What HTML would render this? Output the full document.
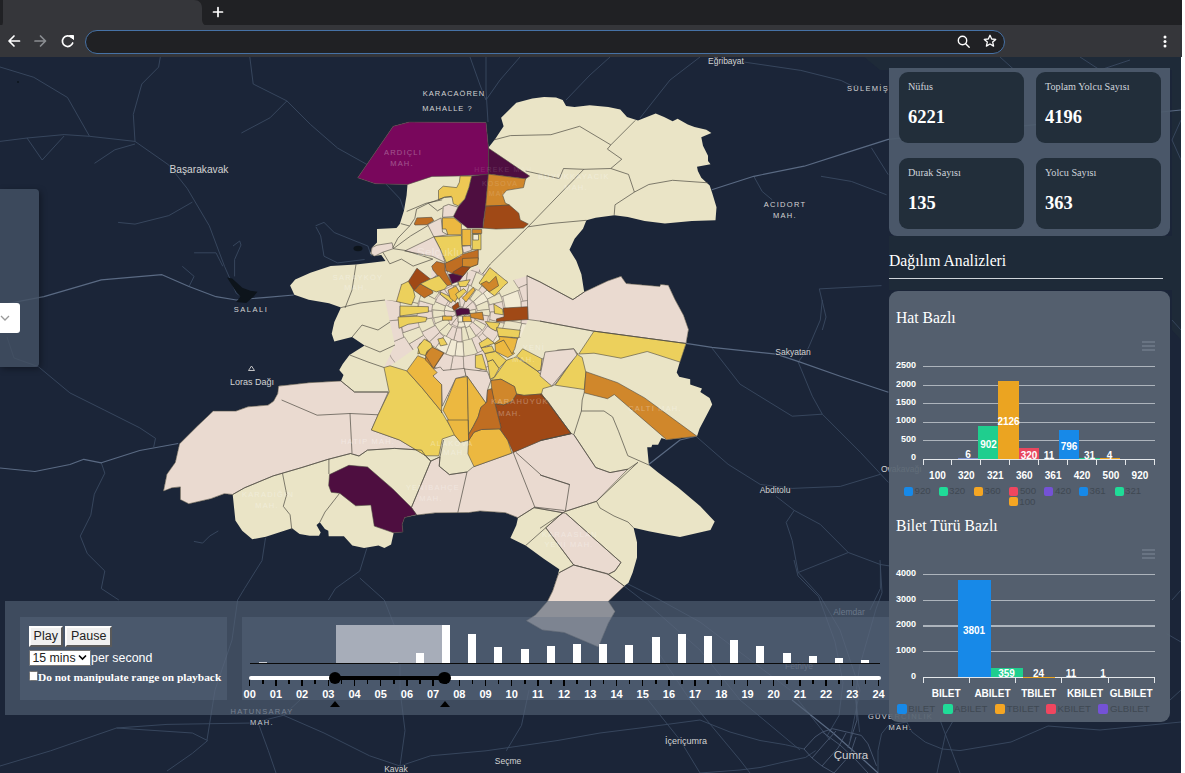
<!DOCTYPE html>
<html><head><meta charset="utf-8">
<style>
*{box-sizing:border-box;margin:0;padding:0}
html,body{width:1185px;height:773px;overflow:hidden;background:#fff;font-family:"Liberation Sans",sans-serif}
#root{position:absolute;left:0;top:0;width:1185px;height:773px;overflow:hidden;background:#fff}
.abs{position:absolute}
#tabbar{left:0;top:0;width:1182px;height:26px;background:#202124}
#tab{left:3px;top:0;width:200px;height:26px;background:#35363a;border-radius:0 8px 0 0}
#toolbar{left:0;top:25px;width:1182px;height:32px;background:#35363a}
#url{left:85px;top:30px;width:920px;height:24px;border-radius:12px;background:#202124;border:1.5px solid #4672a6}
#map{left:0;top:57px;width:1181px;height:716px;background:#1b2538;overflow:hidden}
.serif{font-family:"Liberation Serif",serif}
.card{position:absolute;background:#222e3a;border-radius:9px;width:125px;height:71px}
.card .t{position:absolute;left:9px;top:8.5px;font:10.2px "Liberation Serif",serif;color:#cfd4da;white-space:nowrap}
.card .v{position:absolute;left:9px;top:35px;font:bold 18.5px "Liberation Serif",serif;color:#fff}
.yl{position:absolute;font:bold 9px "Liberation Sans",sans-serif;color:#fff;left:896px;width:20px;text-align:right;line-height:10px}
.xl{position:absolute;font:bold 10px "Liberation Sans",sans-serif;color:#fff;text-align:center;line-height:10px;white-space:nowrap}
.gl{position:absolute;left:923px;width:232px;height:1.2px;background:#adb4bc}
.dl{position:absolute;font:bold 10px "Liberation Sans",sans-serif;color:#fff;text-align:center;line-height:10px;width:30px}
.lg{position:absolute;font:9.7px "Liberation Sans",sans-serif;color:#3f4852;line-height:10px;white-space:nowrap}
.lm{position:absolute;width:9px;height:9px;border-radius:2px}
.hb{position:absolute;width:8px;background:#fff}
.tl{position:absolute;font:bold 11px "Liberation Sans",sans-serif;color:#fff;width:20px;text-align:center;top:688px;line-height:12px}
</style></head><body><div id="root">
<!-- MAP -->
<div id="map" class="abs">
<svg id="mapsvg" width="1181" height="716" viewBox="0 57 1181 716" style="position:absolute;left:0;top:0">
<polygon points="864,57 1181,57 1181,340 1172,330 1172,290 889,290 889,236 1172,236 1172,70 880,70" fill="#1e2a38"/>
<polyline points="0.0,67.0 33.8,77.3 67.5,97.5 89.5,136.3 135.0,141.4 168.8,165.0 187.3,188.6 209.3,225.8 224.5,266.3 236.3,293.3 246.4,300.0" fill="none" stroke="#3a4961" stroke-width="0.9" stroke-linejoin="round"/>
<polyline points="135.0,141.4 133.3,114.4 141.8,84.0 158.6,67.1 160.3,57.0" fill="none" stroke="#3a4961" stroke-width="0.9" stroke-linejoin="round"/>
<polyline points="0.0,141.4 27.0,138.0 64.1,134.6 89.5,136.3" fill="none" stroke="#3a4961" stroke-width="0.9" stroke-linejoin="round"/>
<polyline points="27.0,138.0 42.2,160.0 64.1,136.0" fill="none" stroke="#3a4961" stroke-width="0.9" stroke-linejoin="round"/>
<polyline points="94.5,163.3 114.8,149.8 135.0,144.0" fill="none" stroke="#3a4961" stroke-width="0.9" stroke-linejoin="round"/>
<polyline points="118.1,222.4 135.0,224.1 168.8,215.6 192.4,202.1" fill="none" stroke="#3a4961" stroke-width="0.9" stroke-linejoin="round"/>
<polyline points="249.8,57.0 253.2,84.0 286.9,100.9 310.5,124.5 337.6,148.1 367.9,165.0 400.0,198.8 404.0,210.0" fill="none" stroke="#3a4961" stroke-width="0.9" stroke-linejoin="round"/>
<polyline points="241.4,133.0 270.0,117.8 286.9,100.9" fill="none" stroke="#3a4961" stroke-width="0.9" stroke-linejoin="round"/>
<polyline points="315.6,225.8 324.0,222.4 334.2,232.5 351.0,239.3 367.9,246.0 371.3,256.2" fill="none" stroke="#3a4961" stroke-width="0.9" stroke-linejoin="round"/>
<polyline points="316.0,227.0 320.7,235.9 324.0,256.2 337.6,262.9 364.6,259.5" fill="none" stroke="#3a4961" stroke-width="0.9" stroke-linejoin="round"/>
<polyline points="194.1,252.8 216.0,252.8 222.8,266.3" fill="none" stroke="#3a4961" stroke-width="0.9" stroke-linejoin="round"/>
<polyline points="182.3,266.3 194.1,276.4 189.0,286.5" fill="none" stroke="#3a4961" stroke-width="0.9" stroke-linejoin="round"/>
<polyline points="233.0,246.0 239.7,241.0 241.0,245.0 234.6,259.5 234.6,276.4" fill="none" stroke="#3a4961" stroke-width="0.9" stroke-linejoin="round"/>
<polyline points="7.0,337.0 14.0,358.0 38.4,366.7 69.9,392.9 104.8,410.3 139.7,427.8 155.5,438.3 153.7,447.0" fill="none" stroke="#3a4961" stroke-width="0.9" stroke-linejoin="round"/>
<polyline points="101.3,462.8 104.8,473.2 94.3,494.2 90.8,515.2 80.3,536.1 87.3,553.6 104.8,571.0 101.3,588.5 118.8,600.0" fill="none" stroke="#3a4961" stroke-width="0.9" stroke-linejoin="round"/>
<polyline points="193.9,541.4 202.6,543.1 209.6,536.1 218.3,530.9" fill="none" stroke="#3a4961" stroke-width="0.9" stroke-linejoin="round"/>
<polyline points="265.5,537.9 262.0,560.6 244.5,588.5 237.6,600.0 232.0,640.0 215.0,690.0 207.0,740.0" fill="none" stroke="#3a4961" stroke-width="0.9" stroke-linejoin="round"/>
<polyline points="366.8,548.3 359.8,571.0 335.4,588.5 328.4,600.0" fill="none" stroke="#3a4961" stroke-width="0.9" stroke-linejoin="round"/>
<polyline points="359.8,578.0 384.3,600.0 400.0,640.0 400.0,690.0 405.0,730.5 400.0,766.0" fill="none" stroke="#3a4961" stroke-width="0.9" stroke-linejoin="round"/>
<polyline points="743.7,62.0 800.8,70.4 841.2,80.5 858.0,88.9" fill="none" stroke="#3a4961" stroke-width="0.9" stroke-linejoin="round"/>
<polyline points="753.8,176.3 762.2,191.5 772.3,199.9" fill="none" stroke="#3a4961" stroke-width="0.9" stroke-linejoin="round"/>
<polyline points="821.0,176.3 851.3,181.4 886.6,194.8" fill="none" stroke="#3a4961" stroke-width="0.9" stroke-linejoin="round"/>
<polyline points="871.4,147.8 888.2,174.6" fill="none" stroke="#3a4961" stroke-width="0.9" stroke-linejoin="round"/>
<polyline points="819.3,288.9 881.5,285.6" fill="none" stroke="#3a4961" stroke-width="0.9" stroke-linejoin="round"/>
<polyline points="819.3,288.9 826.0,317.0 822.3,330.0" fill="none" stroke="#3a4961" stroke-width="0.9" stroke-linejoin="round"/>
<polyline points="822.3,300.0 820.3,320.0 808.3,348.1 798.2,362.1 812.3,396.2 822.3,414.2 860.4,452.3 888.4,482.4" fill="none" stroke="#3a4961" stroke-width="0.9" stroke-linejoin="round"/>
<polyline points="712.0,348.1 740.1,384.2 792.2,416.2 822.3,414.2" fill="none" stroke="#3a4961" stroke-width="0.9" stroke-linejoin="round"/>
<polyline points="696.0,436.3 728.1,464.3 760.2,484.4 792.2,488.4 840.3,486.4 880.4,474.3" fill="none" stroke="#3a4961" stroke-width="0.9" stroke-linejoin="round"/>
<polyline points="776.2,496.4 794.2,510.4 820.3,524.4 848.3,552.5 880.4,564.5 890.0,566.0" fill="none" stroke="#3a4961" stroke-width="0.9" stroke-linejoin="round"/>
<polyline points="794.2,510.4 786.2,522.4 792.2,540.5 798.2,572.5 820.3,596.6 840.0,630.0 860.0,690.0 850.0,740.0" fill="none" stroke="#3a4961" stroke-width="0.9" stroke-linejoin="round"/>
<polyline points="798.2,572.5 848.3,552.5" fill="none" stroke="#3a4961" stroke-width="0.9" stroke-linejoin="round"/>
<polyline points="880.4,564.5 880.4,588.6 870.0,610.0" fill="none" stroke="#3a4961" stroke-width="0.9" stroke-linejoin="round"/>
<polyline points="0.0,766.0 50.6,750.8 116.5,728.0 192.4,733.0 207.6,740.6 192.4,753.3 167.0,771.0" fill="none" stroke="#3a4961" stroke-width="0.9" stroke-linejoin="round"/>
<polyline points="116.5,728.0 167.0,724.4 253.0,723.0 283.5,715.3 300.0,700.0" fill="none" stroke="#3a4961" stroke-width="0.9" stroke-linejoin="round"/>
<polyline points="258.2,723.0 268.4,750.8 276.0,773.0" fill="none" stroke="#3a4961" stroke-width="0.9" stroke-linejoin="round"/>
<polyline points="283.5,715.3 324.0,733.0 369.6,755.8 400.0,766.0 430.4,755.8 486.0,750.8 557.0,740.6 600.0,733.0 640.0,728.0 700.0,720.0" fill="none" stroke="#3a4961" stroke-width="0.9" stroke-linejoin="round"/>
<polyline points="529.0,690.0 521.5,725.4 506.3,750.8" fill="none" stroke="#3a4961" stroke-width="0.9" stroke-linejoin="round"/>
<polyline points="640.0,690.0 680.0,740.0 700.0,773.0" fill="none" stroke="#3a4961" stroke-width="0.9" stroke-linejoin="round"/>
<polyline points="650.0,640.0 690.0,700.0 740.0,760.0 750.0,773.0" fill="none" stroke="#3a4961" stroke-width="0.9" stroke-linejoin="round"/>
<polyline points="794.0,560.0 798.0,576.0 818.7,596.8 835.0,641.9 843.0,682.8 839.0,715.5 827.0,736.0" fill="none" stroke="#3a4961" stroke-width="0.9" stroke-linejoin="round"/>
<polyline points="880.0,560.0 882.0,592.7 876.0,609.0 859.6,666.4 855.5,695.0 859.6,732.0" fill="none" stroke="#3a4961" stroke-width="0.9" stroke-linejoin="round"/>
<polyline points="700.0,720.0 730.0,732.0 760.0,740.5 785.3,744.7 804.0,749.0" fill="none" stroke="#3a4961" stroke-width="0.9" stroke-linejoin="round"/>
<polyline points="700.0,773.0 740.0,770.0 760.0,767.5 782.0,762.4 805.6,757.4 815.7,750.6" fill="none" stroke="#3a4961" stroke-width="0.9" stroke-linejoin="round"/>
<polyline points="878.0,773.0 878.0,750.6 881.5,733.8 888.3,725.3 906.8,722.0 912.0,732.0 925.4,742.2 942.3,749.0 960.0,750.6 1011.0,742.0 1048.0,726.0 1100.0,730.0 1181.0,722.0" fill="none" stroke="#3a4961" stroke-width="0.9" stroke-linejoin="round"/>
<polyline points="942.3,749.0 938.9,764.0 937.0,773.0" fill="none" stroke="#3a4961" stroke-width="0.9" stroke-linejoin="round"/>
<polyline points="952.4,722.0 945.6,733.8 942.3,749.0" fill="none" stroke="#3a4961" stroke-width="0.9" stroke-linejoin="round"/>
<polyline points="1166.6,633.7 1181.0,642.0" fill="none" stroke="#3a4961" stroke-width="0.9" stroke-linejoin="round"/>
<polyline points="626.0,583.0 660.0,600.0 700.0,622.0 790.0,690.0 830.0,740.0" fill="none" stroke="#3a4961" stroke-width="0.9" stroke-linejoin="round"/>
<polyline points="624.0,586.0 650.0,606.0 700.0,650.0 740.0,700.0 800.0,750.0" fill="none" stroke="#3a4961" stroke-width="0.9" stroke-linejoin="round"/>
<polyline points="950.0,690.0 940.0,720.0 960.0,773.0" fill="none" stroke="#3a4961" stroke-width="0.9" stroke-linejoin="round"/>
<polyline points="1170.0,700.0 1181.0,690.0" fill="none" stroke="#3a4961" stroke-width="0.9" stroke-linejoin="round"/>
<polyline points="486.0,57.0 486.0,90.0 488.0,122.0" fill="none" stroke="#3a4961" stroke-width="0.9" stroke-linejoin="round"/>
<polyline points="486.0,100.0 500.0,80.0 520.0,57.0" fill="none" stroke="#3a4961" stroke-width="0.9" stroke-linejoin="round"/>
<polyline points="470.0,57.0 480.0,85.0 486.0,100.0" fill="none" stroke="#3a4961" stroke-width="0.9" stroke-linejoin="round"/>
<polyline points="610.0,57.0 590.0,75.0 566.0,100.0" fill="none" stroke="#3a4961" stroke-width="0.9" stroke-linejoin="round"/>
<polyline points="700.0,57.0 670.0,80.0 640.0,118.0" fill="none" stroke="#3a4961" stroke-width="0.9" stroke-linejoin="round"/>
<polyline points="1000.0,57.0 1020.0,75.0 1000.0,100.0" fill="none" stroke="#3a4961" stroke-width="0.9" stroke-linejoin="round"/>
<polyline points="1080.0,57.0 1100.0,70.0 1130.0,60.0" fill="none" stroke="#3a4961" stroke-width="0.9" stroke-linejoin="round"/>
<polyline points="1181.0,120.0 1172.0,140.0 1181.0,160.0" fill="none" stroke="#3a4961" stroke-width="0.9" stroke-linejoin="round"/>
<polyline points="1172.0,320.0 1181.0,330.0" fill="none" stroke="#3a4961" stroke-width="0.9" stroke-linejoin="round"/>
<polyline points="1172.0,600.0 1181.0,590.0" fill="none" stroke="#3a4961" stroke-width="0.9" stroke-linejoin="round"/>
<polyline points="0.0,305.0 43.9,296.7 101.3,279.8 162.0,274.7 189.0,286.5 216.0,296.7 236.3,300.0 266.7,297.3 293.7,295.0" fill="none" stroke="#5a6a83" stroke-width="1.2" stroke-linejoin="round"/>
<polyline points="0.0,468.0 34.9,471.5 69.9,464.5 83.8,459.3 101.3,462.8 139.7,450.5 178.2,443.5" fill="none" stroke="#5a6a83" stroke-width="1.2" stroke-linejoin="round"/>
<polyline points="711.8,189.8 753.8,176.3 804.2,166.2 851.3,151.1 888.2,139.4 1181.0,110.0" fill="none" stroke="#5a6a83" stroke-width="1.2" stroke-linejoin="round"/>
<polyline points="686.0,343.3 712.0,347.3 776.2,354.1 800.2,362.1 840.3,376.2 888.4,392.2" fill="none" stroke="#5a6a83" stroke-width="1.2" stroke-linejoin="round"/>
<polyline points="648.0,465.0 680.0,440.0 697.0,436.0" fill="none" stroke="#5a6a83" stroke-width="1.2" stroke-linejoin="round"/>
<polyline points="792.0,700.0 812.0,716.0 832.0,732.0 850.0,748.0 866.0,762.0 878.0,773.0" fill="none" stroke="#5a6a83" stroke-width="1.2" stroke-linejoin="round"/>
<polyline points="822.4,732.0 840.0,745.0 856.0,760.0 868.0,773.0" fill="none" stroke="#4a5870" stroke-width="0.9" stroke-linejoin="round"/>
<polyline points="832.6,728.7 861.3,735.4 868.0,743.9 876.5,765.8" fill="none" stroke="#4a5870" stroke-width="0.9" stroke-linejoin="round"/>
<polyline points="804.0,749.0 815.0,737.0 822.4,732.0 832.6,728.7" fill="none" stroke="#4a5870" stroke-width="0.9" stroke-linejoin="round"/>
<polyline points="812.0,758.0 826.0,742.0 836.0,731.0" fill="none" stroke="#4a5870" stroke-width="0.9" stroke-linejoin="round"/>
<polyline points="822.0,766.0 838.0,748.0 846.0,733.0" fill="none" stroke="#4a5870" stroke-width="0.9" stroke-linejoin="round"/>
<polyline points="834.0,773.0 850.0,755.0 856.0,737.0" fill="none" stroke="#4a5870" stroke-width="0.9" stroke-linejoin="round"/>
<polyline points="856.0,700.0 857.0,720.0 852.0,735.0 848.0,748.0" fill="none" stroke="#4a5870" stroke-width="0.9" stroke-linejoin="round"/>
<polyline points="804.0,749.0 812.0,758.0 822.0,766.0 834.0,773.0" fill="none" stroke="#4a5870" stroke-width="0.9" stroke-linejoin="round"/>
<polygon points="227.1,277.6 232.2,278.6 242.3,287.7 250.4,290.8 257.5,291.8 253.4,296.8 246.3,302.9 236.200,301.9 240.300,296.8 234.200,288.7" fill="#0d141b"/>
<ellipse cx="358" cy="248.500" rx="4.500" ry="2.800" fill="#0d141b"/>
<circle cx="18" cy="82" r="1" fill="#0d141b"/>
<polygon points="357.7,177.8 393.2,126.3 409.2,122.1 486.0,122.4 488.5,148.2 489.3,146.5 495.2,139.0 503.6,126.3 501.1,117.8 508.7,110.3 516.3,102.7 532.3,98.4 544.1,97.1 556.0,97.6 562.7,100.1 566.1,106.0 574.5,106.9 589.7,105.2 608.3,106.9 620.3,109.4 627.0,117.0 638.0,120.4 655.7,113.6 664.1,117.0 672.6,121.2 677.6,118.7 687.8,124.6 694.5,127.1 706.3,129.7 711.4,133.0 701.3,137.3 703.0,145.7 708.0,155.8 708.0,160.9 710.5,164.3 697.0,166.8 697.9,171.0 701.3,177.8 709.7,185.4 712.2,193.0 716.5,207.3 715.5,220.3 691.9,221.1 664.9,223.6 644.6,221.1 627.8,216.9 614.3,215.2 595.7,217.7 586.4,220.3 583.0,228.7 574.6,238.8 569.5,249.8 576.3,260.8 581.4,274.3 584.2,292.0 607.5,281.0 621.0,276.3 626.1,283.5 659.8,286.4 660.7,284.4 668.3,285.2 675.0,299.6 683.5,315.2 688.5,329.5 686.0,343.9 680.0,361.6 676.7,372.6 679.2,376.8 690.2,379.3 690.2,384.4 702.0,388.6 700.3,392.0 709.6,397.9 712.2,404.6 706.2,416.0 699.5,428.7 697.0,436.3 666.6,439.7 661.5,438.0 658.1,444.7 652.2,444.7 651.4,447.3 647.2,447.3 648.9,465.0 658.1,472.6 678.4,487.8 700.3,506.3 714.7,521.5 710.5,530.0 680.0,537.1 665.7,534.6 648.8,531.2 633.6,527.8 637.0,542.2 637.0,557.4 632.7,572.6 628.5,582.7 624.3,586.1 608.3,601.3 615.0,611.4 608.3,623.2 598.4,647.0 564.2,632.5 542.4,630.0 526.4,620.7 535.7,614.8 547.5,601.3 552.6,591.1 557.6,576.0 559.3,569.2 544.1,559.1 525.6,545.6 510.4,538.0 516.3,525.3 518.0,517.7 505.3,512.7 480.0,511.0 468.8,512.6 435.0,512.9 416.5,515.1 404.6,517.6 402.1,524.4 403.0,532.0 393.7,532.8 391.1,544.6 384.4,548.0 378.5,545.5 364.1,548.0 352.3,545.5 343.9,536.2 328.7,536.2 328.3,530.8 324.9,529.1 319.8,522.3 316.5,524.9 320.7,532.4 319.0,535.8 309.7,535.8 299.6,534.1 292.0,528.2 265.8,536.7 252.3,539.2 242.2,530.8 235.4,520.6 232.7,494.5 224.3,493.7 210.8,498.7 188.8,503.8 180.4,499.6 180.4,486.9 171.9,487.8 163.5,491.1 166.9,474.3 175.3,462.4 179.5,443.9 197.3,426.2 213.3,411.0 236.1,411.0 247.9,406.8 268.1,405.1 273.5,401.3 277.7,393.7 278.6,386.1 308.9,382.7 341.0,381.0 343.5,375.1 339.3,370.0 342.7,364.1 349.5,354.9 364.6,345.6 352.0,337.1 334.3,341.4 331.7,333.8 334.3,321.9 341.0,307.6 329.0,303.2 308.7,299.8 294.3,294.8 290.1,285.5 295.2,279.6 310.4,272.8 330.6,266.1 356.0,264.4 371.1,262.7 385.5,261.0 381.3,255.1 373.7,255.9 370.3,253.4 372.0,247.5 377.0,242.4 377.0,228.9 396.5,228.1 399.8,223.9 404.0,210.4 406.6,195.2 407.5,184.5 375.4,183.7" fill="#eae4c6"/>
<clipPath id="rc"><polygon points="446.0,263.0 462.0,276.0 478.0,266.0 482.0,274.0 490.0,267.0 508.0,282.0 527.0,276.0 528.0,320.0 520.0,338.0 512.0,354.0 495.0,344.0 487.0,372.0 487.0,403.0 465.0,370.0 442.0,406.0 441.6,384.6 432.8,377.1 425.0,356.0 417.0,347.0 390.0,366.0 384.0,367.0 395.0,345.0 390.0,322.0 385.0,300.0 396.0,301.0 401.0,284.0 408.0,281.0 417.0,268.0 431.0,279.0 432.0,266.0 436.0,261.0"/></clipPath><g clip-path="url(#rc)">
<polygon points="446.0,263.0 462.0,276.0 478.0,266.0 482.0,274.0 490.0,267.0 508.0,282.0 527.0,276.0 528.0,320.0 520.0,338.0 512.0,354.0 495.0,344.0 487.0,372.0 487.0,403.0 465.0,370.0 442.0,406.0 441.6,384.6 432.8,377.1 425.0,356.0 417.0,347.0 390.0,366.0 384.0,367.0 395.0,345.0 390.0,322.0 385.0,300.0 396.0,301.0 401.0,284.0 408.0,281.0 417.0,268.0 431.0,279.0 432.0,266.0 436.0,261.0" fill="#eadad0"/>
<polygon points="461.0,312.5 459.6,317.0 456.9,314.8 456.4,311.5 461.0,312.5" fill="#eae4c6" stroke="#6e685e" stroke-width="0.5"/>
<polygon points="461.0,312.5 456.0,311.4 457.1,309.1 459.2,307.7 461.0,312.5" fill="#eadad0" stroke="#6e685e" stroke-width="0.5"/>
<polygon points="461.0,312.5 459.0,307.1 463.1,307.1 466.2,309.9 461.0,312.5" fill="#eadad0" stroke="#6e685e" stroke-width="0.5"/>
<polygon points="461.0,312.5 465.7,310.2 466.2,313.2 464.9,315.9 461.0,312.5" fill="#eae4c6" stroke="#6e685e" stroke-width="0.5"/>
<polygon points="461.0,312.5 465.3,316.3 462.5,318.1 459.2,318.0 461.0,312.5" fill="#eae4c6" stroke="#6e685e" stroke-width="0.5"/>
<polygon points="465.0,316.1 473.1,323.3 469.7,326.2 465.6,328.1 462.5,317.6" fill="#f1ead4" stroke="#6e685e" stroke-width="0.5"/>
<polygon points="462.5,317.7 465.2,326.7 461.3,327.3 457.3,326.8 459.7,317.7" fill="#f1ead4" stroke="#6e685e" stroke-width="0.5"/>
<polygon points="459.7,317.5 457.4,326.7 454.5,325.7 451.9,324.0 457.8,316.5" fill="#eadad0" stroke="#6e685e" stroke-width="0.5"/>
<polygon points="457.3,317.2 451.0,325.1 448.4,322.5 446.5,319.5 455.6,315.1" fill="#eadad0" stroke="#6e685e" stroke-width="0.5"/>
<polygon points="455.7,315.1 445.4,320.0 443.9,315.2 443.9,310.2 455.1,311.7" fill="#eadad0" stroke="#6e685e" stroke-width="0.5"/>
<polygon points="455.5,311.8 444.3,310.3 444.9,307.6 445.9,305.0 456.0,310.0" fill="#f1ead4" stroke="#6e685e" stroke-width="0.5"/>
<polygon points="455.1,309.6 447.8,306.0 450.4,302.2 454.1,299.5 457.9,306.7" fill="#eadad0" stroke="#6e685e" stroke-width="0.5"/>
<polygon points="458.1,307.2 452.9,297.4 456.0,296.1 459.2,295.5 460.4,306.5" fill="#f1ead4" stroke="#6e685e" stroke-width="0.5"/>
<polygon points="460.4,306.6 459.3,296.3 463.0,296.3 466.7,297.2 463.1,307.0" fill="#eadad0" stroke="#6e685e" stroke-width="0.5"/>
<polygon points="462.8,307.6 466.5,297.7 469.8,299.4 472.7,301.9 464.9,309.0" fill="#eadad0" stroke="#6e685e" stroke-width="0.5"/>
<polygon points="464.9,308.9 472.8,301.8 475.2,305.1 476.6,309.0 466.2,311.3" fill="#eadad0" stroke="#6e685e" stroke-width="0.5"/>
<polygon points="467.8,311.0 475.4,309.3 475.7,313.4 474.8,317.5 467.5,314.9" fill="#eae4c6" stroke="#6e685e" stroke-width="0.5"/>
<polygon points="466.8,314.6 477.1,318.3 475.7,321.3 473.8,323.9 465.6,316.6" fill="#eadad0" stroke="#6e685e" stroke-width="0.5"/>
<polygon points="452.4,326.5 446.0,336.9 442.5,334.4 439.4,331.4 448.6,323.4" fill="#eae4c6" stroke="#6e685e" stroke-width="0.5"/>
<polygon points="449.6,322.5 439.3,331.5 436.6,327.9 434.5,323.8 447.1,318.5" fill="#eae4c6" stroke="#6e685e" stroke-width="0.5"/>
<polygon points="446.7,318.6 435.3,323.5 434.3,320.7 433.6,317.8 445.7,315.5" fill="#eae4c6" stroke="#6e685e" stroke-width="0.5"/>
<polygon points="444.6,315.7 433.2,317.9 432.7,313.8 432.8,309.7 444.4,310.9" fill="#eae4c6" stroke="#6e685e" stroke-width="0.5"/>
<polygon points="444.1,310.9 431.6,309.6 432.4,305.2 433.8,301.0 445.4,305.9" fill="#eae4c6" stroke="#6e685e" stroke-width="0.5"/>
<polygon points="445.4,305.9 435.3,301.6 437.4,297.5 440.1,293.9 448.4,301.2" fill="#eadad0" stroke="#6e685e" stroke-width="0.5"/>
<polygon points="449.6,302.3 439.0,292.9 441.3,290.6 443.9,288.5 452.1,300.0" fill="#eadad0" stroke="#6e685e" stroke-width="0.5"/>
<polygon points="451.7,299.5 444.0,288.7 448.4,286.1 453.3,284.3 456.8,297.1" fill="#eadad0" stroke="#6e685e" stroke-width="0.5"/>
<polygon points="456.9,297.5 453.6,285.6 456.9,284.9 460.3,284.6 460.6,296.9" fill="#eae4c6" stroke="#6e685e" stroke-width="0.5"/>
<polygon points="460.6,296.8 460.3,283.3 464.8,283.6 469.3,284.5 465.5,297.4" fill="#eadad0" stroke="#6e685e" stroke-width="0.5"/>
<polygon points="465.7,296.8 469.3,284.7 473.3,286.2 477.0,288.3 470.0,298.8" fill="#eae4c6" stroke="#6e685e" stroke-width="0.5"/>
<polygon points="470.0,298.9 477.4,287.7 480.5,290.1 483.3,292.8 473.2,301.7" fill="#eae4c6" stroke="#6e685e" stroke-width="0.5"/>
<polygon points="473.6,301.4 483.3,292.7 486.2,296.4 488.3,300.6 476.4,305.8" fill="#f1ead4" stroke="#6e685e" stroke-width="0.5"/>
<polygon points="476.2,305.9 487.3,301.0 488.7,305.1 489.5,309.4 477.5,310.7" fill="#eae4c6" stroke="#6e685e" stroke-width="0.5"/>
<polygon points="476.7,310.8 489.8,309.3 489.9,312.7 489.7,316.0 476.7,314.4" fill="#eae4c6" stroke="#6e685e" stroke-width="0.5"/>
<polygon points="476.0,314.3 488.5,315.9 487.5,320.6 485.7,325.0 474.5,319.3" fill="#eadad0" stroke="#6e685e" stroke-width="0.5"/>
<polygon points="475.2,319.7 485.8,325.0 484.3,327.8 482.4,330.3 473.2,322.7" fill="#eae4c6" stroke="#6e685e" stroke-width="0.5"/>
<polygon points="472.6,322.2 482.1,330.1 479.1,333.2 475.7,335.7 469.1,325.3" fill="#eadad0" stroke="#6e685e" stroke-width="0.5"/>
<polygon points="469.6,326.1 477.2,338.1 473.6,340.1 469.7,341.6 465.6,327.9" fill="#eae4c6" stroke="#6e685e" stroke-width="0.5"/>
<polygon points="465.3,326.9 469.6,341.4 465.9,342.2 462.0,342.6 461.5,327.5" fill="#eae4c6" stroke="#6e685e" stroke-width="0.5"/>
<polygon points="461.5,328.2 462.0,341.9 457.7,341.7 453.5,340.9 457.0,327.7" fill="#eadad0" stroke="#6e685e" stroke-width="0.5"/>
<polygon points="456.8,328.2 453.6,340.5 449.6,339.1 445.9,337.1 452.5,326.3" fill="#eadad0" stroke="#6e685e" stroke-width="0.5"/>
<polygon points="478.5,290.1 488.7,277.1 492.0,280.0 495.1,283.2 482.6,293.9" fill="#eadad0" stroke="#6e685e" stroke-width="0.5"/>
<polygon points="483.4,293.2 495.1,283.2 498.4,287.5 501.1,292.3 487.4,299.2" fill="#f1ead4" stroke="#6e685e" stroke-width="0.5"/>
<polygon points="487.4,299.2 499.5,293.1 501.3,297.2 502.7,301.5 489.6,304.9" fill="#eae4c6" stroke="#6e685e" stroke-width="0.5"/>
<polygon points="488.8,305.1 502.2,301.6 503.2,306.7 503.6,311.8 489.7,312.0" fill="#eadad0" stroke="#6e685e" stroke-width="0.5"/>
<polygon points="490.6,312.0 504.9,311.8 504.6,317.5 503.6,323.2 489.7,319.7" fill="#eadad0" stroke="#6e685e" stroke-width="0.5"/>
<polygon points="489.5,319.7 505.0,323.5 503.4,328.6 501.2,333.5 487.1,326.1" fill="#eae4c6" stroke="#6e685e" stroke-width="0.5"/>
<polygon points="487.3,326.2 500.6,333.2 497.2,338.7 493.1,343.6 482.3,333.1" fill="#eadad0" stroke="#6e685e" stroke-width="0.5"/>
<polygon points="482.5,333.3 492.3,342.9 489.3,345.6 486.2,348.1 478.3,336.9" fill="#eadad0" stroke="#6e685e" stroke-width="0.5"/>
<polygon points="477.3,335.5 486.3,348.4 482.1,351.0 477.5,353.2 471.6,338.6" fill="#eadad0" stroke="#6e685e" stroke-width="0.5"/>
<polygon points="471.7,338.8 477.7,353.6 470.9,355.8 463.9,356.8 462.9,340.8" fill="#eae4c6" stroke="#6e685e" stroke-width="0.5"/>
<polygon points="462.9,342.1 463.9,356.3 459.3,356.4 454.8,356.0 456.8,341.9" fill="#f1ead4" stroke="#6e685e" stroke-width="0.5"/>
<polygon points="457.0,340.9 454.8,356.5 450.2,355.6 445.8,354.2 451.2,339.4" fill="#f1ead4" stroke="#6e685e" stroke-width="0.5"/>
<polygon points="451.3,339.0 446.0,353.5 440.5,351.1 435.4,347.9 444.5,335.4" fill="#f1ead4" stroke="#6e685e" stroke-width="0.5"/>
<polygon points="443.7,336.4 435.3,348.1 431.9,345.4 428.8,342.4 439.4,332.6" fill="#eadad0" stroke="#6e685e" stroke-width="0.5"/>
<polygon points="439.8,332.1 428.4,342.7 424.5,337.8 421.3,332.4 435.2,325.4" fill="#eadad0" stroke="#6e685e" stroke-width="0.5"/>
<polygon points="434.5,325.7 420.4,332.8 417.9,326.9 416.3,320.8 431.9,317.9" fill="#eae4c6" stroke="#6e685e" stroke-width="0.5"/>
<polygon points="432.6,317.8 417.0,320.7 416.4,315.5 416.3,310.3 432.1,311.1" fill="#eadad0" stroke="#6e685e" stroke-width="0.5"/>
<polygon points="431.6,311.1 418.0,310.4 418.6,305.6 419.6,300.8 432.7,304.5" fill="#eadad0" stroke="#6e685e" stroke-width="0.5"/>
<polygon points="434.0,304.9 418.4,300.4 419.9,296.2 421.7,292.0 436.1,299.5" fill="#eae4c6" stroke="#6e685e" stroke-width="0.5"/>
<polygon points="434.7,298.8 422.9,292.6 425.7,288.0 429.0,283.8 439.0,292.7" fill="#eae4c6" stroke="#6e685e" stroke-width="0.5"/>
<polygon points="438.7,292.5 427.9,282.8 431.4,279.3 435.3,276.2 443.7,288.0" fill="#eadad0" stroke="#6e685e" stroke-width="0.5"/>
<polygon points="444.7,289.4 435.5,276.4 441.1,273.1 447.0,270.6 452.0,285.6" fill="#eadad0" stroke="#6e685e" stroke-width="0.5"/>
<polygon points="452.1,285.9 446.6,269.4 451.5,268.1 456.4,267.3 458.2,284.6" fill="#f1ead4" stroke="#6e685e" stroke-width="0.5"/>
<polygon points="458.2,284.4 456.5,268.0 462.4,267.8 468.2,268.3 465.5,284.7" fill="#eadad0" stroke="#6e685e" stroke-width="0.5"/>
<polygon points="465.7,284.0 468.3,268.0 472.8,268.9 477.1,270.4 471.3,285.5" fill="#eadad0" stroke="#6e685e" stroke-width="0.5"/>
<polygon points="471.0,286.3 476.4,272.2 482.2,274.9 487.6,278.5 478.3,290.4" fill="#eae4c6" stroke="#6e685e" stroke-width="0.5"/>
<polygon points="463.3,356.5 464.2,374.6 457.0,374.5 449.9,373.7 453.1,355.8" fill="#eadad0" stroke="#6e685e" stroke-width="0.5"/>
<polygon points="453.0,356.5 450.1,372.2 442.0,370.1 434.2,367.0 441.3,352.7" fill="#eadad0" stroke="#6e685e" stroke-width="0.5"/>
<polygon points="441.8,351.6 433.3,368.9 426.9,365.2 420.9,360.9 433.2,346.0" fill="#eae4c6" stroke="#6e685e" stroke-width="0.5"/>
<polygon points="433.0,346.3 422.3,359.1 415.1,352.1 409.2,343.9 423.5,335.3" fill="#eadad0" stroke="#6e685e" stroke-width="0.5"/>
<polygon points="423.5,335.3 407.7,344.8 404.6,339.1 402.1,333.0 419.5,326.9" fill="#eae4c6" stroke="#6e685e" stroke-width="0.5"/>
<polygon points="419.2,327.0 403.3,332.6 401.1,324.6 400.0,316.4 416.9,315.3" fill="#eadad0" stroke="#6e685e" stroke-width="0.5"/>
<polygon points="417.2,315.3 399.0,316.4 399.1,307.9 400.3,299.6 418.1,303.3" fill="#eae4c6" stroke="#6e685e" stroke-width="0.5"/>
<polygon points="418.0,303.3 401.1,299.7 403.6,291.2 407.3,283.1 422.4,291.4" fill="#eae4c6" stroke="#6e685e" stroke-width="0.5"/>
<polygon points="421.8,291.0 405.5,282.1 409.1,276.2 413.3,270.8 427.3,283.0" fill="#eadad0" stroke="#6e685e" stroke-width="0.5"/>
<polygon points="427.2,283.0 413.4,270.9 420.4,264.1 428.3,258.5 437.8,274.1" fill="#eadad0" stroke="#6e685e" stroke-width="0.5"/>
<polygon points="437.8,274.3 429.4,260.4 435.4,257.2 441.8,254.7 446.9,270.1" fill="#eadad0" stroke="#6e685e" stroke-width="0.5"/>
<polygon points="447.2,271.0 441.6,254.2 449.5,252.1 457.5,251.2 458.5,268.8" fill="#f1ead4" stroke="#6e685e" stroke-width="0.5"/>
<polygon points="458.5,269.1 457.6,251.9 465.5,251.9 473.3,253.0 469.8,269.9" fill="#f1ead4" stroke="#6e685e" stroke-width="0.5"/>
<polygon points="469.9,269.8 473.4,252.9 479.7,254.6 485.8,256.9 478.8,272.7" fill="#eadad0" stroke="#6e685e" stroke-width="0.5"/>
<polygon points="479.3,271.5 486.5,255.5 494.7,259.9 502.2,265.6 490.6,278.8" fill="#eadad0" stroke="#6e685e" stroke-width="0.5"/>
<polygon points="489.6,280.0 502.7,265.0 508.0,270.3 512.7,276.2 496.4,287.6" fill="#eae4c6" stroke="#6e685e" stroke-width="0.5"/>
<polygon points="496.6,287.5 512.9,276.1 516.9,282.7 520.1,289.8 501.6,296.9" fill="#eae4c6" stroke="#6e685e" stroke-width="0.5"/>
<polygon points="502.8,296.4 517.9,290.6 520.8,300.4 522.0,310.5 505.7,311.1" fill="#f1ead4" stroke="#6e685e" stroke-width="0.5"/>
<polygon points="505.6,311.1 522.0,310.5 521.8,316.8 521.1,323.0 505.0,320.2" fill="#eae4c6" stroke="#6e685e" stroke-width="0.5"/>
<polygon points="505.3,320.2 521.8,323.1 519.6,331.7 516.2,340.0 501.3,332.5" fill="#eae4c6" stroke="#6e685e" stroke-width="0.5"/>
<polygon points="499.8,331.8 516.0,339.9 511.6,347.4 506.1,354.2 492.8,342.0" fill="#f1ead4" stroke="#6e685e" stroke-width="0.5"/>
<polygon points="493.1,342.2 506.2,354.3 500.7,359.5 494.6,364.0 484.9,349.1" fill="#eae4c6" stroke="#6e685e" stroke-width="0.5"/>
<polygon points="485.0,349.3 494.1,363.2 487.7,366.8 481.0,369.6 475.5,353.9" fill="#eadad0" stroke="#6e685e" stroke-width="0.5"/>
<polygon points="475.6,354.1 481.3,370.4 472.9,372.7 464.2,373.8 463.3,356.5" fill="#eadad0" stroke="#6e685e" stroke-width="0.5"/>
<polygon points="505.6,354.1 521.5,369.0 515.0,375.2 508.0,380.7 495.6,362.8" fill="#eadad0" stroke="#6e685e" stroke-width="0.5"/>
<polygon points="495.7,362.9 509.3,382.6 496.3,389.9 482.3,394.9 476.3,371.7" fill="#eadad0" stroke="#6e685e" stroke-width="0.5"/>
<polygon points="476.4,372.1 481.7,392.7 473.4,394.4 464.9,395.3 463.9,374.0" fill="#eadad0" stroke="#6e685e" stroke-width="0.5"/>
<polygon points="463.9,374.1 464.9,396.6 452.1,396.2 439.5,393.9 445.3,372.1" fill="#eadad0" stroke="#6e685e" stroke-width="0.5"/>
<polygon points="445.1,372.7 439.9,392.4 426.4,387.5 413.9,380.4 425.5,363.6" fill="#f1ead4" stroke="#6e685e" stroke-width="0.5"/>
<polygon points="425.9,363.0 413.8,380.5 406.8,375.1 400.4,369.0 416.1,354.4" fill="#eadad0" stroke="#6e685e" stroke-width="0.5"/>
<polygon points="416.0,354.5 400.3,369.2 391.5,358.0 384.8,345.4 404.5,336.9" fill="#eadad0" stroke="#6e685e" stroke-width="0.5"/>
<polygon points="403.8,337.2 383.8,345.8 379.8,334.3 377.5,322.2 399.2,319.7" fill="#eadad0" stroke="#6e685e" stroke-width="0.5"/>
<polygon points="399.8,319.6 377.6,322.2 377.0,310.1 378.3,298.1 400.3,301.9" fill="#eadad0" stroke="#6e685e" stroke-width="0.5"/>
<polygon points="400.4,301.9 377.4,297.9 380.1,286.8 384.2,276.3 405.3,286.2" fill="#eadad0" stroke="#6e685e" stroke-width="0.5"/>
<polygon points="405.8,286.4 386.3,277.3 392.7,266.1 400.8,256.0 416.5,270.7" fill="#eae4c6" stroke="#6e685e" stroke-width="0.5"/>
<polygon points="415.7,270.0 400.4,255.7 407.4,249.0 415.1,243.3 426.7,260.7" fill="#eae4c6" stroke="#6e685e" stroke-width="0.5"/>
<polygon points="427.0,261.3 414.7,242.6 425.6,236.5 437.3,232.1 443.6,253.5" fill="#f1ead4" stroke="#6e685e" stroke-width="0.5"/>
<polygon points="443.3,252.4 437.3,232.1 448.9,229.6 460.7,228.7 460.8,249.9" fill="#eae4c6" stroke="#6e685e" stroke-width="0.5"/>
<polygon points="460.8,250.4 460.7,227.3 472.7,228.1 484.5,230.7 478.2,252.8" fill="#eae4c6" stroke="#6e685e" stroke-width="0.5"/>
<polygon points="478.0,253.3 484.0,232.6 494.5,236.4 504.4,241.6 493.2,259.9" fill="#eadad0" stroke="#6e685e" stroke-width="0.5"/>
<polygon points="493.2,259.9 505.4,240.0 515.1,246.9 523.7,255.1 506.5,270.9" fill="#f1ead4" stroke="#6e685e" stroke-width="0.5"/>
<polygon points="507.1,270.3 522.2,256.5 530.7,267.6 537.3,280.0 518.4,288.0" fill="#eadad0" stroke="#6e685e" stroke-width="0.5"/>
<polygon points="518.9,287.8 539.2,279.1 542.4,288.1 544.6,297.3 523.0,301.3" fill="#eadad0" stroke="#6e685e" stroke-width="0.5"/>
<polygon points="521.2,301.6 544.4,297.4 545.7,312.4 544.4,327.4 521.2,323.3" fill="#eadad0" stroke="#6e685e" stroke-width="0.5"/>
<polygon points="521.9,323.4 542.4,327.1 540.2,336.0 537.1,344.7 518.0,336.6" fill="#f1ead4" stroke="#6e685e" stroke-width="0.5"/>
<polygon points="518.7,336.9 539.4,345.7 532.4,358.8 523.2,370.6 506.8,355.3" fill="#f1ead4" stroke="#6e685e" stroke-width="0.5"/>
</g>
<polygon points="163.5,491.1 166.9,474.3 175.3,462.4 179.5,443.9 197.3,426.2 213.3,411.0 236.1,411.0 247.9,406.8 268.1,405.1 273.5,401.3 277.7,393.7 278.6,386.1 308.9,382.7 341.0,381.0 354.5,392.0 388.3,392.0 378.1,414.8 371.4,430.0 399.6,440.0 424.9,455.2 430.8,461.1 425.7,456.0 421.5,450.1 394.5,448.4 367.5,450.1 359.0,456.0 350.6,453.5 327.8,459.4 301.9,467.5 273.2,475.9 244.5,487.8 232.7,494.5 224.3,493.7 210.8,498.7 188.8,503.8 180.4,499.6 180.4,486.9 171.9,487.8" fill="#eadad0" stroke="#4e4a42" stroke-width="0.6" stroke-linejoin="round"/>
<polygon points="430.8,461.1 440.0,456.9 439.2,466.2 449.4,474.6 467.0,472.0 472.7,467.3 474.0,466.6 511.8,453.1 513.2,452.4 541.5,440.3 571.2,433.5 573.8,434.6 595.7,467.5 610.0,472.6 627.8,469.2 596.5,501.3 565.3,511.4 562.7,512.7 534.0,507.6 518.0,517.7 505.3,512.7 480.0,511.0 468.8,512.6 435.0,512.9 416.5,515.1 411.4,507.5" fill="#eadad0" stroke="#4e4a42" stroke-width="0.6" stroke-linejoin="round"/>
<polygon points="566.0,513.5 621.0,562.4 615.0,570.9 608.3,574.3 573.7,565.0 545.8,527.8 562.7,512.7" fill="#eadad0" stroke="#4e4a42" stroke-width="0.6" stroke-linejoin="round"/>
<polygon points="559.3,572.6 573.7,565.0 606.6,573.4 624.3,586.1 608.3,601.3 615.0,611.4 608.3,623.2 598.4,647.0 564.2,632.5 542.4,630.0 526.4,620.7 535.7,614.8 547.5,601.3 552.6,591.1 557.6,576.0" fill="#eadad0" stroke="#4e4a42" stroke-width="0.6" stroke-linejoin="round"/>
<polygon points="584.2,292.0 607.5,281.0 621.0,276.3 626.1,283.5 659.8,286.4 660.7,284.4 668.3,285.2 675.0,299.6 683.5,315.2 688.5,329.5 686.0,343.5 594.0,331.2 540.0,321.1 528.0,319.5 527.6,306.7 526.9,275.7 540.0,281.9 572.9,299.6" fill="#eadad0" stroke="#4e4a42" stroke-width="0.6" stroke-linejoin="round"/>
<polygon points="433.5,369.0 440.3,367.0 443.0,370.4 464.6,368.4 465.9,375.8 455.8,378.5 442.3,406.2 441.6,384.6 432.8,377.1" fill="#eadad0" stroke="#4e4a42" stroke-width="0.6" stroke-linejoin="round"/>
<polygon points="464.6,369.0 487.5,371.7 490.9,380.5 487.5,390.0 486.2,403.5 467.3,376.5 465.9,375.8" fill="#eadad0" stroke="#4e4a42" stroke-width="0.6" stroke-linejoin="round"/>
<polygon points="384.0,367.5 390.0,365.8 406.8,370.9 422.0,387.8 441.4,411.4 452.4,430.0 460.5,442.0 454.4,434.9 442.3,438.9 438.9,455.8 425.4,455.8 424.9,455.2 399.6,440.0 371.4,430.0 378.1,414.8 389.1,392.0" fill="#ecd05c" stroke="#4e4a42" stroke-width="0.6" stroke-linejoin="round"/>
<polygon points="406.8,370.9 417.8,355.7 426.2,359.1 432.2,367.5 437.2,372.6 433.0,375.9 441.6,384.6 441.6,412.9 441.4,411.4 422.0,387.8" fill="#ecb840" stroke="#4e4a42" stroke-width="0.6" stroke-linejoin="round"/>
<polygon points="417.8,354.0 419.5,343.9 427.0,339.7 432.2,346.4 426.2,350.6" fill="#ecd05c" stroke="#4e4a42" stroke-width="0.6" stroke-linejoin="round"/>
<polygon points="426.2,350.6 432.2,347.3 444.0,353.2 433.8,368.4 425.4,359.9" fill="#d0872b" stroke="#4e4a42" stroke-width="0.6" stroke-linejoin="round"/>
<polygon points="455.8,378.5 467.3,376.5 468.6,434.5 460.5,441.3 443.0,410.2" fill="#ecb840" stroke="#4e4a42" stroke-width="0.6" stroke-linejoin="round"/>
<polygon points="467.3,376.5 486.2,403.5 480.8,407.5 478.1,417.0 473.3,426.4 468.6,434.5" fill="#ecb840" stroke="#4e4a42" stroke-width="0.6" stroke-linejoin="round"/>
<polygon points="447.0,420.0 468.0,420.0 468.6,440.3 460.5,442.3 454.4,434.9" fill="#ecb840" stroke="#4e4a42" stroke-width="0.6" stroke-linejoin="round"/>
<polygon points="468.6,440.3 474.0,432.2 481.4,429.5 499.7,428.8 507.8,440.3 511.8,453.1 474.0,466.6 467.9,453.8" fill="#ecb840" stroke="#4e4a42" stroke-width="0.6" stroke-linejoin="round"/>
<polygon points="494.9,376.5 506.4,360.3 515.9,356.9 537.5,371.1 552.3,385.9 542.9,388.6 541.5,394.0 524.0,395.4 516.5,394.0 514.5,386.6 501.0,379.2 490.9,380.5" fill="#ecd05c" stroke="#4e4a42" stroke-width="0.6" stroke-linejoin="round"/>
<polygon points="516.5,356.2 522.6,348.8 542.2,358.9 540.8,370.4 537.5,371.1" fill="#ecd05c" stroke="#4e4a42" stroke-width="0.6" stroke-linejoin="round"/>
<polygon points="542.2,358.9 557.7,350.1 573.9,348.8 577.3,353.5 555.0,384.6 552.3,385.9 537.5,371.1 540.8,370.4" fill="#eadad0" stroke="#4e4a42" stroke-width="0.6" stroke-linejoin="round"/>
<polygon points="577.3,353.5 578.0,354.9 582.2,357.4 585.9,372.6 584.2,389.5 555.2,385.2" fill="#ecd05c" stroke="#4e4a42" stroke-width="0.6" stroke-linejoin="round"/>
<polygon points="556.9,350.6 573.8,348.9 577.1,354.9 551.8,386.1 540.0,375.9 545.0,352.0" fill="#eadad0" stroke="#4e4a42" stroke-width="0.6" stroke-linejoin="round"/>
<polygon points="594.0,331.2 686.0,343.5 680.0,362.1 647.2,351.5 621.0,358.2 594.0,353.2 578.8,354.0" fill="#ecd05c" stroke="#4e4a42" stroke-width="0.6" stroke-linejoin="round"/>
<polygon points="475.4,355.5 482.1,354.2 486.8,370.4 475.4,367.7" fill="#ecd05c" stroke="#4e4a42" stroke-width="0.6" stroke-linejoin="round"/>
<polygon points="487.5,361.6 492.9,359.6 499.0,368.4 494.3,377.1 490.2,379.2" fill="#ecd05c" stroke="#4e4a42" stroke-width="0.6" stroke-linejoin="round"/>
<polygon points="484.8,353.5 495.6,351.5 506.4,360.3 499.0,368.4 492.9,359.6 487.5,361.6" fill="#ecd05c" stroke="#4e4a42" stroke-width="0.6" stroke-linejoin="round"/>
<polygon points="494.9,344.1 503.7,340.0 514.5,353.5 507.8,357.6 495.6,351.5" fill="#ecb840" stroke="#4e4a42" stroke-width="0.6" stroke-linejoin="round"/>
<polygon points="585.9,371.7 617.6,382.7 644.6,397.9 697.0,436.3 666.6,439.7 614.3,394.5 607.5,398.7 584.2,392.8" fill="#d0872b" stroke="#4e4a42" stroke-width="0.6" stroke-linejoin="round"/>
<polygon points="516.5,394.0 524.0,395.4 541.5,394.0 571.2,433.5 541.5,440.3 513.2,452.4 507.8,440.3 499.7,428.8 501.0,427.8 494.9,403.5 503.7,404.8 511.8,401.4" fill="#a04916" stroke="#4e4a42" stroke-width="0.6" stroke-linejoin="round"/>
<polygon points="490.9,380.5 501.0,379.2 514.5,386.6 516.5,394.0 511.8,401.4 503.7,404.8 494.9,403.5 492.2,394.0" fill="#d0872b" stroke="#4e4a42" stroke-width="0.6" stroke-linejoin="round"/>
<polygon points="487.5,390.0 491.6,388.6 494.9,403.5 501.0,427.8 499.7,428.8 481.4,429.5 474.0,432.2 468.6,440.6 468.6,434.5 473.3,426.4 478.1,417.0 480.8,407.5 486.8,402.1" fill="#c06e22" stroke="#4e4a42" stroke-width="0.6" stroke-linejoin="round"/>
<polygon points="425.4,355.5 431.5,346.8 443.6,352.8 433.5,368.4" fill="#d0872b" stroke="#4e4a42" stroke-width="0.6" stroke-linejoin="round"/>
<polygon points="540.0,394.5 546.8,400.0 571.2,433.8 540.0,440.5 541.5,440.3 571.2,433.5 541.5,394.0" fill="#a04916" stroke="#4e4a42" stroke-width="0.6" stroke-linejoin="round"/>
<polygon points="357.7,177.8 393.2,126.3 409.2,122.1 486.0,122.4 488.5,148.2 488.5,174.4 458.0,176.0 432.0,176.4 407.5,184.5 375.4,183.7" fill="#79075c" stroke="#4e4a42" stroke-width="0.6" stroke-linejoin="round"/>
<polygon points="488.5,148.2 529.6,176.1 525.6,178.8 488.4,174.1" fill="#4e0e40" stroke="#4e4a42" stroke-width="0.6" stroke-linejoin="round"/>
<polygon points="471.6,176.1 488.4,174.1 485.7,205.8 483.0,224.0 483.0,228.1 467.5,228.1 461.4,223.3 453.3,216.6 458.1,207.1 464.8,199.0 468.9,187.6" fill="#4e0e40" stroke="#4e4a42" stroke-width="0.6" stroke-linejoin="round"/>
<polygon points="488.4,174.1 525.6,178.8 523.5,187.6 506.7,190.3 502.6,195.0 505.3,203.1 509.4,205.1 485.7,206.2" fill="#d0872b" stroke="#4e4a42" stroke-width="0.6" stroke-linejoin="round"/>
<polygon points="485.7,206.2 509.4,205.1 518.8,213.2 520.2,220.0 528.3,224.0 523.5,228.1 495.9,229.0 483.0,228.1" fill="#a04916" stroke="#4e4a42" stroke-width="0.6" stroke-linejoin="round"/>
<polygon points="438.5,190.3 443.2,186.2 456.7,187.6 459.4,182.2 460.1,176.1 471.6,176.1 468.9,187.6 464.8,199.0 458.1,205.8 453.3,203.8 452.0,197.0 444.6,197.0 438.5,199.7" fill="#edc854" stroke="#4e4a42" stroke-width="0.6" stroke-linejoin="round"/>
<polygon points="443.2,206.5 448.6,204.4 458.1,207.1 453.3,216.6 442.5,217.3" fill="#eadad0" stroke="#4e4a42" stroke-width="0.6" stroke-linejoin="round"/>
<polygon points="414.2,224.0 416.9,217.9 431.7,217.3 433.8,220.6 427.0,224.7 415.0,225.0" fill="#c06e22" stroke="#4e4a42" stroke-width="0.6" stroke-linejoin="round"/>
<polygon points="427.7,224.7 441.2,217.9 442.5,232.1 447.9,234.8 433.8,236.8" fill="#eadad0" stroke="#4e4a42" stroke-width="0.6" stroke-linejoin="round"/>
<polygon points="442.5,217.9 454.0,217.9 461.4,224.0 461.4,234.8 447.9,234.8 446.0,229.0 442.5,229.0" fill="#ecb840" stroke="#4e4a42" stroke-width="0.6" stroke-linejoin="round"/>
<polygon points="433.8,236.8 461.4,235.5 462.8,253.7 446.6,263.2 440.5,249.7" fill="#ecd05c" stroke="#4e4a42" stroke-width="0.6" stroke-linejoin="round"/>
<polygon points="404.7,251.0 433.8,236.8 440.5,249.7 445.2,262.5 432.4,256.4" fill="#eadad0" stroke="#4e4a42" stroke-width="0.6" stroke-linejoin="round"/>
<polygon points="462.1,229.4 470.9,229.4 470.9,245.6 462.1,245.6" fill="#ecb840" stroke="#4e4a42" stroke-width="0.6" stroke-linejoin="round"/>
<polygon points="472.2,229.4 481.7,229.4 481.7,233.5 472.2,233.5" fill="#d0872b" stroke="#4e4a42" stroke-width="0.6" stroke-linejoin="round"/>
<polygon points="472.2,234.0 481.0,234.0 481.0,249.7 472.2,249.7" fill="#ecd05c" stroke="#4e4a42" stroke-width="0.6" stroke-linejoin="round"/>
<polygon points="473.0,234.5 478.5,234.5 478.5,240.0 473.0,240.0" fill="#f1ead4" stroke="#4e4a42" stroke-width="0.6" stroke-linejoin="round"/>
<polygon points="462.1,246.3 470.2,245.6 471.6,250.3 463.5,253.0" fill="#eadad0" stroke="#4e4a42" stroke-width="0.6" stroke-linejoin="round"/>
<polygon points="371.2,253.3 372.0,247.5 377.0,245.2 392.1,242.8 393.3,248.7 382.8,252.2 374.7,256.2" fill="#eadad0" stroke="#4e4a42" stroke-width="0.6" stroke-linejoin="round"/>
<polygon points="462.1,254.4 478.3,249.7 478.3,257.8 477.6,264.5 470.2,267.2 462.8,276.3 452.7,273.6 445.9,270.6 445.2,263.2 459.4,257.0" fill="#c06e22" stroke="#4e4a42" stroke-width="0.6" stroke-linejoin="round"/>
<polygon points="462.5,258.5 478.3,257.8 477.6,264.5 470.2,267.2 462.5,267.0" fill="#d0872b" stroke="#4e4a42" stroke-width="0.6" stroke-linejoin="round"/>
<polygon points="453.0,272.0 462.0,266.5 470.2,267.2 462.8,276.3 452.7,273.6" fill="#a04916" stroke="#4e4a42" stroke-width="0.6" stroke-linejoin="round"/>
<polygon points="431.7,266.2 436.5,261.5 444.6,263.5 445.2,271.6 452.0,284.4 447.3,285.8 440.5,279.0 433.0,270.0" fill="#c06e22" stroke="#4e4a42" stroke-width="0.6" stroke-linejoin="round"/>
<polygon points="448.6,274.3 452.7,273.6 462.8,276.3 459.4,281.1 452.0,283.8" fill="#4e0e40" stroke="#4e4a42" stroke-width="0.6" stroke-linejoin="round"/>
<polygon points="408.1,281.7 416.9,268.2 430.4,279.0 420.3,283.8 414.2,290.5" fill="#a04916" stroke="#4e4a42" stroke-width="0.6" stroke-linejoin="round"/>
<polygon points="420.3,283.8 432.4,290.5 433.0,293.0 424.3,297.9 414.2,290.5" fill="#c06e22" stroke="#4e4a42" stroke-width="0.6" stroke-linejoin="round"/>
<polygon points="401.5,284.6 408.3,281.3 413.3,289.7 415.0,296.5 411.6,304.9 396.5,301.5" fill="#ecd05c" stroke="#4e4a42" stroke-width="0.6" stroke-linejoin="round"/>
<polygon points="400.0,306.0 428.4,306.7 428.4,312.1 400.0,316.0" fill="#ecd05c" stroke="#4e4a42" stroke-width="0.6" stroke-linejoin="round"/>
<polygon points="398.0,317.0 417.6,316.2 427.0,317.5 425.7,321.6 408.1,324.3 399.0,328.3" fill="#ecd05c" stroke="#4e4a42" stroke-width="0.6" stroke-linejoin="round"/>
<polygon points="420.3,283.8 430.4,279.0 439.2,275.7 447.3,285.8 444.6,289.2 436.5,291.9 432.4,290.5" fill="#ecd05c" stroke="#4e4a42" stroke-width="0.6" stroke-linejoin="round"/>
<polygon points="440.5,291.9 454.0,298.6 451.3,302.7 440.5,294.6" fill="#ecd05c" stroke="#4e4a42" stroke-width="0.6" stroke-linejoin="round"/>
<polygon points="458.1,281.7 470.2,279.7 466.2,286.5 459.4,286.5" fill="#ecd05c" stroke="#4e4a42" stroke-width="0.6" stroke-linejoin="round"/>
<polygon points="448.0,290.0 456.0,286.0 460.0,293.0 455.0,302.0 450.0,298.0" fill="#ecb840" stroke="#4e4a42" stroke-width="0.6" stroke-linejoin="round"/>
<polygon points="452.0,306.7 458.1,302.0 459.4,306.7 454.0,310.8" fill="#a04916" stroke="#4e4a42" stroke-width="0.6" stroke-linejoin="round"/>
<polygon points="455.4,310.1 460.8,308.1 468.9,308.7 470.2,314.1 462.1,314.8 456.7,316.2" fill="#4e0e40" stroke="#4e4a42" stroke-width="0.6" stroke-linejoin="round"/>
<polygon points="470.2,313.5 482.4,312.1 483.7,320.2 470.9,317.5" fill="#d0872b" stroke="#4e4a42" stroke-width="0.6" stroke-linejoin="round"/>
<polygon points="442.5,316.2 452.0,316.2 452.0,320.2 442.5,320.2" fill="#ecb840" stroke="#4e4a42" stroke-width="0.6" stroke-linejoin="round"/>
<polygon points="462.8,316.2 470.2,316.2 471.6,321.6 462.8,321.6" fill="#ecb840" stroke="#4e4a42" stroke-width="0.6" stroke-linejoin="round"/>
<polygon points="458.0,316.0 462.5,316.0 462.5,322.0 458.0,322.0" fill="#f1ead4" stroke="#4e4a42" stroke-width="0.6" stroke-linejoin="round"/>
<polygon points="503.3,308.1 527.6,306.7 528.0,319.5 496.5,321.6 496.5,318.9 504.0,316.8" fill="#a04916" stroke="#4e4a42" stroke-width="0.6" stroke-linejoin="round"/>
<polygon points="493.8,304.0 502.6,309.4 503.3,314.8 494.5,313.5" fill="#ecd05c" stroke="#4e4a42" stroke-width="0.6" stroke-linejoin="round"/>
<polygon points="479.0,283.1 489.8,267.6 508.0,282.4 504.0,285.8 494.5,295.9 489.1,291.9" fill="#ecd05c" stroke="#4e4a42" stroke-width="0.6" stroke-linejoin="round"/>
<polygon points="481.0,283.8 486.4,281.1 489.1,283.1 495.9,276.3 498.6,285.8 489.1,291.9" fill="#d0872b" stroke="#4e4a42" stroke-width="0.6" stroke-linejoin="round"/>
<polygon points="485.1,321.6 499.9,322.9 495.9,331.0 490.5,328.3" fill="#ecd05c" stroke="#4e4a42" stroke-width="0.6" stroke-linejoin="round"/>
<polygon points="496.5,327.6 520.2,330.3 518.8,337.8 498.6,336.4" fill="#ecd05c" stroke="#4e4a42" stroke-width="0.6" stroke-linejoin="round"/>
<polygon points="498.6,336.4 517.5,338.4 514.8,348.6 512.1,354.0 503.7,340.0 494.9,344.1 494.5,343.2 499.9,339.1" fill="#ecb840" stroke="#4e4a42" stroke-width="0.6" stroke-linejoin="round"/>
<polygon points="479.0,343.2 487.8,337.8 494.5,343.2 481.0,347.9" fill="#ecd05c" stroke="#4e4a42" stroke-width="0.6" stroke-linejoin="round"/>
<polygon points="481.0,347.9 491.8,345.9 494.5,351.3 484.8,353.5" fill="#ecd05c" stroke="#4e4a42" stroke-width="0.6" stroke-linejoin="round"/>
<polygon points="437.8,339.1 443.2,337.8 447.3,344.5 440.5,345.9" fill="#ecd05c" stroke="#4e4a42" stroke-width="0.6" stroke-linejoin="round"/>
<polygon points="417.6,347.2 424.3,339.1 431.1,343.2 432.4,347.2 427.0,351.3 425.4,355.5 420.0,354.0" fill="#ecd05c" stroke="#4e4a42" stroke-width="0.6" stroke-linejoin="round"/>
<polygon points="329.5,474.6 348.9,465.3 367.5,467.0 392.8,488.9 411.4,507.5 416.5,514.6 404.6,517.6 402.1,524.4 403.0,532.0 393.7,532.8 374.3,526.1 370.9,505.0 355.7,505.8 339.7,493.2 331.2,492.3 328.7,485.6" fill="#4e0e40" stroke="#4e4a42" stroke-width="0.6" stroke-linejoin="round"/>
<polygon points="455.6,294.0 463.7,288.6 466.4,291.3 458.3,299.4" fill="#ecd05c" stroke="#4e4a42" stroke-width="0.6" stroke-linejoin="round"/>
<polygon points="462.4,298.0 467.8,292.7 473.2,287.3 475.0,290.0 466.0,302.0" fill="#ecb840" stroke="#4e4a42" stroke-width="0.6" stroke-linejoin="round"/>
<polyline points="494.3,139.8 510.4,135.6 550.9,134.7 579.6,126.3 610.8,144.9 635.3,120.4" fill="none" stroke="#4e4a42" stroke-width="0.7" stroke-linejoin="round"/>
<polyline points="610.8,144.9 607.4,149.1 621.8,159.2 610.8,168.5 583.8,169.3 563.5,168.5 559.3,178.6 525.6,171.0" fill="none" stroke="#4e4a42" stroke-width="0.7" stroke-linejoin="round"/>
<polyline points="610.8,168.5 628.5,174.4 634.4,192.1 615.0,204.8 614.2,214.9" fill="none" stroke="#4e4a42" stroke-width="0.7" stroke-linejoin="round"/>
<polyline points="634.4,192.1 648.8,184.5 672.6,180.3 708.0,182.8" fill="none" stroke="#4e4a42" stroke-width="0.7" stroke-linejoin="round"/>
<polyline points="583.8,169.3 528.1,226.8 490.3,264.0 482.4,274.0" fill="none" stroke="#4e4a42" stroke-width="0.7" stroke-linejoin="round"/>
<polyline points="528.1,226.8 551.0,223.5 586.4,220.3" fill="none" stroke="#4e4a42" stroke-width="0.7" stroke-linejoin="round"/>
<polyline points="540.0,321.1 594.0,331.2 686.0,343.5" fill="none" stroke="#4e4a42" stroke-width="0.7" stroke-linejoin="round"/>
<polyline points="540.0,281.9 572.9,299.6 584.2,292.0" fill="none" stroke="#4e4a42" stroke-width="0.7" stroke-linejoin="round"/>
<polyline points="526.9,275.7 540.0,281.9" fill="none" stroke="#4e4a42" stroke-width="0.7" stroke-linejoin="round"/>
<polyline points="581.4,411.0 604.0,411.0 612.6,416.9 618.5,431.2 627.8,455.7 648.9,465.0" fill="none" stroke="#4e4a42" stroke-width="0.7" stroke-linejoin="round"/>
<polyline points="582.2,400.0 581.4,411.0 573.8,434.6 595.7,467.5 610.0,472.6 627.8,469.2 637.9,462.4" fill="none" stroke="#4e4a42" stroke-width="0.7" stroke-linejoin="round"/>
<polyline points="584.2,392.8 582.2,400.0" fill="none" stroke="#4e4a42" stroke-width="0.7" stroke-linejoin="round"/>
<polyline points="637.9,462.4 596.5,501.3 565.3,511.4 540.0,528.3" fill="none" stroke="#4e4a42" stroke-width="0.7" stroke-linejoin="round"/>
<polyline points="540.0,475.0 569.5,484.4 565.3,511.4" fill="none" stroke="#4e4a42" stroke-width="0.7" stroke-linejoin="round"/>
<polyline points="513.2,452.4 534.8,507.1 564.5,510.5" fill="none" stroke="#4e4a42" stroke-width="0.7" stroke-linejoin="round"/>
<polyline points="515.9,452.4 541.5,475.4 569.9,484.8" fill="none" stroke="#4e4a42" stroke-width="0.7" stroke-linejoin="round"/>
<polyline points="596.5,501.3 600.0,508.0 614.0,516.0 628.0,522.0 633.6,527.8" fill="none" stroke="#4e4a42" stroke-width="0.7" stroke-linejoin="round"/>
<polyline points="518.0,517.7 534.0,507.6 562.7,512.7 525.6,545.6" fill="none" stroke="#4e4a42" stroke-width="0.7" stroke-linejoin="round"/>
<polyline points="566.0,513.5 621.0,562.4 615.0,570.9 608.3,574.3 573.7,565.0 545.8,527.8" fill="none" stroke="#4e4a42" stroke-width="0.7" stroke-linejoin="round"/>
<polyline points="559.3,572.6 573.7,565.0" fill="none" stroke="#4e4a42" stroke-width="0.7" stroke-linejoin="round"/>
<polyline points="608.3,574.3 624.3,586.1" fill="none" stroke="#4e4a42" stroke-width="0.7" stroke-linejoin="round"/>
<polyline points="232.7,494.5 244.5,487.8 273.2,475.9 301.9,467.5 327.8,459.4 350.6,453.5 359.0,456.0 367.5,450.1 394.5,448.4 421.5,450.1 425.7,456.0 430.8,461.1 411.4,507.5" fill="none" stroke="#4e4a42" stroke-width="0.7" stroke-linejoin="round"/>
<polyline points="282.5,473.4 286.7,494.5 283.3,506.3 290.1,514.8 291.8,530.0" fill="none" stroke="#4e4a42" stroke-width="0.7" stroke-linejoin="round"/>
<polyline points="328.9,459.1 328.9,474.0" fill="none" stroke="#4e4a42" stroke-width="0.7" stroke-linejoin="round"/>
<polyline points="339.7,493.2 325.0,512.0 319.8,522.3" fill="none" stroke="#4e4a42" stroke-width="0.7" stroke-linejoin="round"/>
<polyline points="281.6,400.0 317.1,415.2 350.0,413.5 378.0,414.8" fill="none" stroke="#4e4a42" stroke-width="0.7" stroke-linejoin="round"/>
<polyline points="341.0,381.0 354.5,392.0 388.3,392.0" fill="none" stroke="#4e4a42" stroke-width="0.7" stroke-linejoin="round"/>
<polyline points="350.0,413.5 352.0,453.0" fill="none" stroke="#4e4a42" stroke-width="0.7" stroke-linejoin="round"/>
<polyline points="430.8,461.1 440.0,456.9 439.2,466.2 449.4,474.6 467.0,472.0 457.8,512.6" fill="none" stroke="#4e4a42" stroke-width="0.7" stroke-linejoin="round"/>
<polyline points="443.5,440.0 440.0,456.9" fill="none" stroke="#4e4a42" stroke-width="0.7" stroke-linejoin="round"/>
<polyline points="356.0,264.4 352.0,290.0 345.0,308.0" fill="none" stroke="#4e4a42" stroke-width="0.7" stroke-linejoin="round"/>
<polyline points="349.5,354.9 368.0,362.0 384.0,367.5" fill="none" stroke="#4e4a42" stroke-width="0.7" stroke-linejoin="round"/>
<polyline points="364.6,345.6 380.0,352.0 395.0,345.0" fill="none" stroke="#4e4a42" stroke-width="0.7" stroke-linejoin="round"/>
<polyline points="352.0,337.1 362.0,325.0 378.0,330.0 390.0,322.0" fill="none" stroke="#4e4a42" stroke-width="0.7" stroke-linejoin="round"/>
<polyline points="341.0,307.6 360.0,303.0 385.0,300.0" fill="none" stroke="#4e4a42" stroke-width="0.7" stroke-linejoin="round"/>
<polyline points="400.8,223.6 409.6,226.0 414.8,218.4 416.6,209.1 428.2,203.3 444.5,197.5 451.5,196.3" fill="none" stroke="#4e4a42" stroke-width="0.7" stroke-linejoin="round"/>
<polyline points="406.7,211.4 425.9,203.3 442.2,199.8" fill="none" stroke="#4e4a42" stroke-width="0.7" stroke-linejoin="round"/>
<polyline points="409.6,226.0 397.9,238.2 392.7,248.1" fill="none" stroke="#4e4a42" stroke-width="0.7" stroke-linejoin="round"/>
<polyline points="428.2,225.4 410.7,235.9 393.3,248.7" fill="none" stroke="#4e4a42" stroke-width="0.7" stroke-linejoin="round"/>
<polyline points="393.3,248.7 404.9,250.4 432.8,259.1" fill="none" stroke="#4e4a42" stroke-width="0.7" stroke-linejoin="round"/>
<polyline points="382.8,252.2 389.8,263.8 401.4,259.1 413.1,266.1 432.8,259.1" fill="none" stroke="#4e4a42" stroke-width="0.7" stroke-linejoin="round"/>
<polyline points="428.2,203.3 437.5,210.8 442.7,207.9" fill="none" stroke="#4e4a42" stroke-width="0.7" stroke-linejoin="round"/>
<text x="199" y="173" font-family="Liberation Sans, sans-serif" font-size="10.2" letter-spacing="0" text-anchor="middle" fill="#d4d4d4" font-weight="normal" opacity="1" stroke="#1b2538" stroke-width="1.6" paint-order="stroke" stroke-linejoin="round">Başarakavak</text>
<text x="251" y="312" font-family="Liberation Sans, sans-serif" font-size="7.5" letter-spacing="1.5" text-anchor="middle" fill="#d4d4d4" font-weight="normal" opacity="1" stroke="#1b2538" stroke-width="1.6" paint-order="stroke" stroke-linejoin="round">SALALI</text>
<text x="252" y="385" font-family="Liberation Sans, sans-serif" font-size="9" letter-spacing="0" text-anchor="middle" fill="#d4d4d4" font-weight="normal" opacity="1" stroke="#1b2538" stroke-width="1.6" paint-order="stroke" stroke-linejoin="round">Loras Dağı</text>
<path d="M248.500 370.500l3-4.500 3 4.500z" fill="none" stroke="#d4d4d4" stroke-width="0.900"/>
<text x="454" y="96" font-family="Liberation Sans, sans-serif" font-size="7.5" letter-spacing="1.0" text-anchor="middle" fill="#d4d4d4" font-weight="normal" opacity="1" stroke="#1b2538" stroke-width="1.6" paint-order="stroke" stroke-linejoin="round">KARACAÖREN</text>
<text x="447.5" y="110.5" font-family="Liberation Sans, sans-serif" font-size="7.5" letter-spacing="1.0" text-anchor="middle" fill="#d4d4d4" font-weight="normal" opacity="1" stroke="#1b2538" stroke-width="1.6" paint-order="stroke" stroke-linejoin="round">MAHALLE ?</text>
<text x="726" y="64" font-family="Liberation Sans, sans-serif" font-size="8.5" letter-spacing="0" text-anchor="middle" fill="#d4d4d4" font-weight="normal" opacity="1" stroke="#1b2538" stroke-width="1.6" paint-order="stroke" stroke-linejoin="round">Eğribayat</text>
<text x="868" y="91" font-family="Liberation Sans, sans-serif" font-size="7.5" letter-spacing="1.3" text-anchor="middle" fill="#d4d4d4" font-weight="normal" opacity="1" stroke="#1b2538" stroke-width="1.6" paint-order="stroke" stroke-linejoin="round">SÜLEMİŞ</text>
<text x="785" y="207" font-family="Liberation Sans, sans-serif" font-size="7.5" letter-spacing="1.3" text-anchor="middle" fill="#d4d4d4" font-weight="normal" opacity="1" stroke="#1b2538" stroke-width="1.6" paint-order="stroke" stroke-linejoin="round">ACIDORT</text>
<text x="785" y="218" font-family="Liberation Sans, sans-serif" font-size="7.5" letter-spacing="1.3" text-anchor="middle" fill="#d4d4d4" font-weight="normal" opacity="1" stroke="#1b2538" stroke-width="1.6" paint-order="stroke" stroke-linejoin="round">MAH.</text>
<text x="793" y="355" font-family="Liberation Sans, sans-serif" font-size="8.5" letter-spacing="0" text-anchor="middle" fill="#d4d4d4" font-weight="normal" opacity="1" stroke="#1b2538" stroke-width="1.6" paint-order="stroke" stroke-linejoin="round">Sakyatan</text>
<text x="775" y="493" font-family="Liberation Sans, sans-serif" font-size="8.5" letter-spacing="0" text-anchor="middle" fill="#d4d4d4" font-weight="normal" opacity="1" stroke="#1b2538" stroke-width="1.6" paint-order="stroke" stroke-linejoin="round">Abditolu</text>
<text x="881" y="472" font-family="Liberation Sans, sans-serif" font-size="8.5" letter-spacing="0" text-anchor="start" fill="#d4d4d4" font-weight="normal" opacity="1" stroke="#1b2538" stroke-width="1.6" paint-order="stroke" stroke-linejoin="round">Ovakavağı</text>
<text x="849" y="615" font-family="Liberation Sans, sans-serif" font-size="8.5" letter-spacing="0" text-anchor="middle" fill="#8d97a6" font-weight="normal" opacity="1" stroke="#1b2538" stroke-width="1.6" paint-order="stroke" stroke-linejoin="round">Alemdar</text>
<text x="799" y="669" font-family="Liberation Sans, sans-serif" font-size="8.5" letter-spacing="0" text-anchor="middle" fill="#7d8796" font-weight="normal" opacity="1" stroke="#1b2538" stroke-width="1.6" paint-order="stroke" stroke-linejoin="round">Fethiye</text>
<text x="262" y="714" font-family="Liberation Sans, sans-serif" font-size="7.5" letter-spacing="1.3" text-anchor="middle" fill="#aeb4bd" font-weight="normal" opacity="1" stroke="#1b2538" stroke-width="1.6" paint-order="stroke" stroke-linejoin="round">HATUNSARAY</text>
<text x="262" y="725" font-family="Liberation Sans, sans-serif" font-size="7.5" letter-spacing="1.3" text-anchor="middle" fill="#c8ccd2" font-weight="normal" opacity="1" stroke="#1b2538" stroke-width="1.6" paint-order="stroke" stroke-linejoin="round">MAH.</text>
<text x="396" y="772" font-family="Liberation Sans, sans-serif" font-size="8.5" letter-spacing="0" text-anchor="middle" fill="#d4d4d4" font-weight="normal" opacity="1" stroke="#1b2538" stroke-width="1.6" paint-order="stroke" stroke-linejoin="round">Kavak</text>
<text x="508" y="764" font-family="Liberation Sans, sans-serif" font-size="8.5" letter-spacing="0" text-anchor="middle" fill="#d4d4d4" font-weight="normal" opacity="1" stroke="#1b2538" stroke-width="1.6" paint-order="stroke" stroke-linejoin="round">Seçme</text>
<text x="686" y="744" font-family="Liberation Sans, sans-serif" font-size="9" letter-spacing="0" text-anchor="middle" fill="#d4d4d4" font-weight="normal" opacity="1" stroke="#1b2538" stroke-width="1.6" paint-order="stroke" stroke-linejoin="round">İçeriçumra</text>
<text x="851" y="759" font-family="Liberation Sans, sans-serif" font-size="11.5" letter-spacing="0" text-anchor="middle" fill="#d4d4d4" font-weight="normal" opacity="1" stroke="#1b2538" stroke-width="1.6" paint-order="stroke" stroke-linejoin="round">Çumra</text>
<text x="900.5" y="718.5" font-family="Liberation Sans, sans-serif" font-size="7.5" letter-spacing="1.3" text-anchor="middle" fill="#d4d4d4" font-weight="normal" opacity="1" stroke="#1b2538" stroke-width="1.6" paint-order="stroke" stroke-linejoin="round">GÜVERCİNLİK</text>
<text x="900.5" y="729.5" font-family="Liberation Sans, sans-serif" font-size="7.5" letter-spacing="1.3" text-anchor="middle" fill="#d4d4d4" font-weight="normal" opacity="1" stroke="#1b2538" stroke-width="1.6" paint-order="stroke" stroke-linejoin="round">MAH.</text>
<text x="1150" y="722" font-family="Liberation Sans, sans-serif" font-size="7" letter-spacing="0" text-anchor="middle" fill="#d4d4d4" font-weight="normal" opacity="1" stroke="#1b2538" stroke-width="1.6" paint-order="stroke" stroke-linejoin="round"></text>
<text x="403" y="155" font-family="Liberation Sans, sans-serif" font-size="7.5" letter-spacing="1.2" text-anchor="middle" fill="#fff" opacity="0.3">ARDIÇLI</text>
<text x="402" y="166" font-family="Liberation Sans, sans-serif" font-size="7.5" letter-spacing="1.2" text-anchor="middle" fill="#fff" opacity="0.3">MAH.</text>
<text x="505" y="172" font-family="Liberation Sans, sans-serif" font-size="7" letter-spacing="1.2" text-anchor="middle" fill="#fff" opacity="0.12">HEREKE MAH.</text>
<text x="500" y="186" font-family="Liberation Sans, sans-serif" font-size="7" letter-spacing="1.2" text-anchor="middle" fill="#fff" opacity="0.14">KOSOVA</text>
<text x="500" y="196" font-family="Liberation Sans, sans-serif" font-size="7" letter-spacing="1.2" text-anchor="middle" fill="#fff" opacity="0.14">MAH.</text>
<text x="574" y="179" font-family="Liberation Sans, sans-serif" font-size="7.5" letter-spacing="1.2" text-anchor="middle" fill="#fff" opacity="0.3">BÜYÜKKAYACIK</text>
<text x="576" y="190" font-family="Liberation Sans, sans-serif" font-size="7.5" letter-spacing="1.2" text-anchor="middle" fill="#fff" opacity="0.3">MAH.</text>
<text x="440" y="256" font-family="Liberation Sans, sans-serif" font-size="11.5" letter-spacing="0.3" text-anchor="middle" fill="#fff" opacity="0.3">Selçuklu</text>
<text x="358" y="280" font-family="Liberation Sans, sans-serif" font-size="7.5" letter-spacing="1.2" text-anchor="middle" fill="#fff" opacity="0.3">SARAYKÖY</text>
<text x="356" y="290" font-family="Liberation Sans, sans-serif" font-size="7.5" letter-spacing="1.2" text-anchor="middle" fill="#fff" opacity="0.3">MAH.</text>
<text x="520" y="404" font-family="Liberation Sans, sans-serif" font-size="7.5" letter-spacing="1.2" text-anchor="middle" fill="#fff" opacity="0.3">KARAHÜYÜK</text>
<text x="510" y="416" font-family="Liberation Sans, sans-serif" font-size="7.5" letter-spacing="1.2" text-anchor="middle" fill="#fff" opacity="0.3">MAH.</text>
<text x="655" y="411" font-family="Liberation Sans, sans-serif" font-size="7.5" letter-spacing="1.2" text-anchor="middle" fill="#fff" opacity="0.3">ÇALTI MAH.</text>
<text x="368" y="444" font-family="Liberation Sans, sans-serif" font-size="7.5" letter-spacing="1.2" text-anchor="middle" fill="#fff" opacity="0.35">HATIP MAH.</text>
<text x="268" y="497" font-family="Liberation Sans, sans-serif" font-size="7.5" letter-spacing="1.2" text-anchor="middle" fill="#fff" opacity="0.3">KARADİĞİN</text>
<text x="267" y="508" font-family="Liberation Sans, sans-serif" font-size="7.5" letter-spacing="1.2" text-anchor="middle" fill="#fff" opacity="0.3">MAH.</text>
<text x="433" y="490" font-family="Liberation Sans, sans-serif" font-size="7.5" letter-spacing="1.2" text-anchor="middle" fill="#fff" opacity="0.3">YENİBAHÇE</text>
<text x="431" y="501" font-family="Liberation Sans, sans-serif" font-size="7.5" letter-spacing="1.2" text-anchor="middle" fill="#fff" opacity="0.3">MAH.</text>
<text x="570" y="537" font-family="Liberation Sans, sans-serif" font-size="7.5" letter-spacing="1.2" text-anchor="middle" fill="#fff" opacity="0.3">KARAASLAN</text>
<text x="569" y="547" font-family="Liberation Sans, sans-serif" font-size="7.5" letter-spacing="1.2" text-anchor="middle" fill="#fff" opacity="0.3">YENİ MAH.</text>
<text x="452" y="446" font-family="Liberation Sans, sans-serif" font-size="7.5" letter-spacing="1.2" text-anchor="middle" fill="#fff" opacity="0.3">ALAKOVA</text>
<text x="455" y="455" font-family="Liberation Sans, sans-serif" font-size="7.5" letter-spacing="1.2" text-anchor="middle" fill="#fff" opacity="0.3">MAH.</text>
<text x="534" y="350" font-family="Liberation Sans, sans-serif" font-size="7.5" letter-spacing="1.2" text-anchor="middle" fill="#fff" opacity="0.3">YENİ</text>
<text x="524" y="362" font-family="Liberation Sans, sans-serif" font-size="7.5" letter-spacing="1.2" text-anchor="middle" fill="#fff" opacity="0.3">MAH.</text>
</svg>
</div>
<!-- BROWSER CHROME -->
<div id="tabbar" class="abs"></div>
<svg class="abs" style="left:0;top:0" width="215" height="26"><path d="M0 26C3 26 3 23 3 20L3 0L194 0C199 0 202 3 202 8L202 19C202 23 204 26 208 26Z" fill="#35363a"/></svg>
<div id="toolbar" class="abs"></div>
<div id="url" class="abs"></div>
<svg class="abs" style="left:0;top:0" width="1182" height="57" viewBox="0 0 1182 57">
<g stroke="#fff" stroke-width="1.7" fill="none" stroke-linecap="round" stroke-linejoin="round">
<path d="M213.5 12h9M218 7.5v9"/>
<path d="M19.5 41h-10M14 36l-5 5 5 5"/>
<path d="M35 41h10M40.500 36l5 5-5 5" stroke="#8a8d91"/>
<path d="M71.500 37.500a5.300 5.300 0 1 0 1.200 5.500"/>
<circle cx="962.500" cy="40.500" r="4.200" stroke-width="1.400"/><path d="M965.700 43.700l3.500 3.500" stroke-width="1.400"/>
<path d="M990 35.300l1.700 3.700 4 .4-3 2.700.9 4-3.600-2.100-3.600 2.100.9-4-3-2.700 4-.4z" stroke-width="1.300"/>
</g>
<path d="M69.500 35.500h4v4z" fill="#fff" stroke="#fff" stroke-width="1" stroke-linejoin="round"/>
<circle cx="1165" cy="37" r="1.500" fill="#fff"/><circle cx="1165" cy="41.500" r="1.500" fill="#fff"/><circle cx="1165" cy="46" r="1.500" fill="#fff"/>
</svg>
<!-- LEFT PANEL -->
<div class="abs" style="left:0;top:189px;width:39px;height:178px;background:rgba(68,82,100,.82);border-radius:0 4px 4px 0;box-shadow:2px 2px 6px rgba(0,0,0,.35)"></div>
<div class="abs" style="left:0;top:303px;width:20px;height:30px;background:#fff;border-radius:0 3px 3px 0"></div>
<svg class="abs" style="left:0;top:312px" width="12" height="12"><path d="M1 4l4 4 4-4" stroke="#999" stroke-width="1.300" fill="none"/></svg>
<!-- STATS PANEL -->
<div class="abs" style="left:889px;top:68px;width:281px;height:168px;background:rgba(77,91,109,.93);border-radius:0 0 8px 8px"></div>
<div class="card" style="left:899px;top:72px"><div class="t">Nüfus</div><div class="v">6221</div></div>
<div class="card" style="left:1036px;top:72px"><div class="t">Toplam Yolcu Sayısı</div><div class="v">4196</div></div>
<div class="card" style="left:899px;top:158px"><div class="t">Durak Sayısı</div><div class="v">135</div></div>
<div class="card" style="left:1036px;top:158px"><div class="t">Yolcu Sayısı</div><div class="v">363</div></div>
<div class="abs serif" style="left:889px;top:252px;font-size:15.7px;color:#fff;white-space:nowrap">Dağılım Analizleri</div>
<div class="abs" style="left:889px;top:278px;width:274px;height:1px;background:#cfd4da"></div>
<!-- CHART PANEL -->
<div id="cp" class="abs" style="left:889px;top:291px;width:281px;height:431px;background:rgba(88,100,114,.93);border-radius:9px"></div>
<div class="abs serif" style="left:896px;top:309px;font-size:15.7px;color:#fff;white-space:nowrap">Hat Bazlı</div>
<div class="abs serif" style="left:896px;top:517px;font-size:15.7px;color:#fff;white-space:nowrap">Bilet Türü Bazlı</div>
<svg class="abs" style="left:1142px;top:341px" width="13" height="10"><path d="M0 1h13M0 5h13M0 9h13" stroke="#7e8a97" stroke-width="1.1"/></svg>
<svg class="abs" style="left:1142px;top:549px" width="13" height="10"><path d="M0 1h13M0 5h13M0 9h13" stroke="#7e8a97" stroke-width="1.1"/></svg>
<div class="gl" style="top:366.2px"></div>
<div class="yl" style="top:359.9px">2500</div>
<div class="gl" style="top:385.0px"></div>
<div class="yl" style="top:378.7px">2000</div>
<div class="gl" style="top:403.1px"></div>
<div class="yl" style="top:396.8px">1500</div>
<div class="gl" style="top:421.5px"></div>
<div class="yl" style="top:415.2px">1000</div>
<div class="gl" style="top:440.0px"></div>
<div class="yl" style="top:433.7px">500</div>
<div class="gl" style="top:458.5px"></div>
<div class="yl" style="top:452.2px">0</div>
<div class="abs" style="left:923px;top:458.5px;width:232px;height:1.5px;background:#e4e7ea"></div>
<div class="abs" style="left:922.5px;top:459px;width:1px;height:6px;background:#e4e7ea"></div>
<div class="abs" style="left:951.4px;top:459px;width:1px;height:6px;background:#e4e7ea"></div>
<div class="abs" style="left:980.4px;top:459px;width:1px;height:6px;background:#e4e7ea"></div>
<div class="abs" style="left:1009.3px;top:459px;width:1px;height:6px;background:#e4e7ea"></div>
<div class="abs" style="left:1038.2px;top:459px;width:1px;height:6px;background:#e4e7ea"></div>
<div class="abs" style="left:1067.1px;top:459px;width:1px;height:6px;background:#e4e7ea"></div>
<div class="abs" style="left:1096.0px;top:459px;width:1px;height:6px;background:#e4e7ea"></div>
<div class="abs" style="left:1125.0px;top:459px;width:1px;height:6px;background:#e4e7ea"></div>
<div class="abs" style="left:1153.9px;top:459px;width:1px;height:6px;background:#e4e7ea"></div>
<div class="xl" style="left:923.0px;width:28.9px;top:471px">100</div>
<div class="xl" style="left:951.9px;width:28.9px;top:471px">320</div>
<div class="xl" style="left:980.9px;width:28.9px;top:471px">321</div>
<div class="xl" style="left:1009.8px;width:28.9px;top:471px">360</div>
<div class="xl" style="left:1038.7px;width:28.9px;top:471px">361</div>
<div class="xl" style="left:1067.6px;width:28.9px;top:471px">420</div>
<div class="xl" style="left:1096.5px;width:28.9px;top:471px">500</div>
<div class="xl" style="left:1125.5px;width:28.9px;top:471px">920</div>
<div class="abs" style="left:978.0px;top:425.6px;width:20.4px;height:33.4px;background:#1fce8e"></div>
<div class="abs" style="left:998.4px;top:380.6px;width:20.4px;height:78.4px;background:#eba421"></div>
<div class="abs" style="left:1018.8px;top:447.6px;width:20.2px;height:11.4px;background:#e8475e"></div>
<div class="abs" style="left:1059.0px;top:429.5px;width:20.3px;height:29.5px;background:#1789e8"></div>
<div class="abs" style="left:1079.3px;top:457.6px;width:20.7px;height:1.4px;background:#1fce8e"></div>
<div class="abs" style="left:1100.0px;top:458.4px;width:20.0px;height:0.6px;background:#eba421"></div>
<div class="abs" style="left:958.0px;top:458.4px;width:20.0px;height:0.6px;background:#7a8fd0"></div>
<div class="dl" style="left:953.0px;top:450.0px">6</div>
<div class="dl" style="left:973.5px;top:439.5px">902</div>
<div class="dl" style="left:993.5px;top:417.0px">2126</div>
<div class="dl" style="left:1014.0px;top:450.5px">320</div>
<div class="dl" style="left:1034.0px;top:450.5px">11</div>
<div class="dl" style="left:1054.0px;top:441.5px">796</div>
<div class="dl" style="left:1074.5px;top:450.5px">31</div>
<div class="dl" style="left:1094.5px;top:450.5px">4</div>
<div class="lm" style="left:904.0px;top:486.5px;width:9px;height:9px;background:#1789e8"></div>
<div class="lg" style="left:914.5px;top:486.0px">920</div>
<div class="lm" style="left:938.6px;top:486.5px;width:9px;height:9px;background:#1fdc98"></div>
<div class="lg" style="left:949.1px;top:486.0px">320</div>
<div class="lm" style="left:974.0px;top:486.5px;width:9px;height:9px;background:#f5a623"></div>
<div class="lg" style="left:984.5px;top:486.0px">360</div>
<div class="lm" style="left:1009.4px;top:486.5px;width:9px;height:9px;background:#f0465f"></div>
<div class="lg" style="left:1019.9px;top:486.0px">500</div>
<div class="lm" style="left:1044.4px;top:486.5px;width:9px;height:9px;background:#7452d6"></div>
<div class="lg" style="left:1054.9px;top:486.0px">420</div>
<div class="lm" style="left:1079.0px;top:486.5px;width:9px;height:9px;background:#1789e8"></div>
<div class="lg" style="left:1089.5px;top:486.0px">361</div>
<div class="lm" style="left:1114.6px;top:486.5px;width:9px;height:9px;background:#1fdc98"></div>
<div class="lg" style="left:1125.1px;top:486.0px">321</div>
<div class="lm" style="left:1008.8px;top:497.2px;width:9px;height:9px;background:#f5a623"></div>
<div class="lg" style="left:1019.3px;top:496.7px">100</div>
<div class="gl" style="top:574.3px"></div>
<div class="yl" style="top:568.0px">4000</div>
<div class="gl" style="top:599.8px"></div>
<div class="yl" style="top:593.5px">3000</div>
<div class="gl" style="top:625.4px"></div>
<div class="yl" style="top:619.1px">2000</div>
<div class="gl" style="top:651.0px"></div>
<div class="yl" style="top:644.7px">1000</div>
<div class="gl" style="top:676.8px"></div>
<div class="yl" style="top:670.5px">0</div>
<div class="abs" style="left:923px;top:676.8px;width:232px;height:1.5px;background:#e4e7ea"></div>
<div class="abs" style="left:922.5px;top:677px;width:1px;height:6px;background:#e4e7ea"></div>
<div class="abs" style="left:968.8px;top:677px;width:1px;height:6px;background:#e4e7ea"></div>
<div class="abs" style="left:1015.1px;top:677px;width:1px;height:6px;background:#e4e7ea"></div>
<div class="abs" style="left:1061.3px;top:677px;width:1px;height:6px;background:#e4e7ea"></div>
<div class="abs" style="left:1107.6px;top:677px;width:1px;height:6px;background:#e4e7ea"></div>
<div class="abs" style="left:1153.9px;top:677px;width:1px;height:6px;background:#e4e7ea"></div>
<div class="xl" style="left:923.0px;width:46.3px;top:688.5px">BILET</div>
<div class="xl" style="left:969.3px;width:46.3px;top:688.5px">ABILET</div>
<div class="xl" style="left:1015.6px;width:46.3px;top:688.5px">TBILET</div>
<div class="xl" style="left:1061.8px;width:46.3px;top:688.5px">KBILET</div>
<div class="xl" style="left:1108.1px;width:46.3px;top:688.5px">GLBILET</div>
<div class="abs" style="left:958.3px;top:580.0px;width:32.4px;height:97.3px;background:#1789e8"></div>
<div class="abs" style="left:990.7px;top:668.3px;width:32.0px;height:9.0px;background:#1fce8e"></div>
<div class="abs" style="left:1022.7px;top:676.6px;width:32.3px;height:0.7px;background:#eba421"></div>
<div class="dl" style="left:959.0px;top:626.0px">3801</div>
<div class="dl" style="left:991.5px;top:669.0px">359</div>
<div class="dl" style="left:1023.5px;top:669.0px">24</div>
<div class="dl" style="left:1056.0px;top:669.0px">11</div>
<div class="dl" style="left:1088.0px;top:669.0px">1</div>
<div class="lm" style="left:896.8px;top:703.7px;width:10px;height:10px;background:#1789e8"></div>
<div class="lg" style="left:908.3px;top:703.7px">BILET</div>
<div class="lm" style="left:942.5px;top:703.7px;width:10px;height:10px;background:#1fdc98"></div>
<div class="lg" style="left:954.0px;top:703.7px">ABILET</div>
<div class="lm" style="left:995.2px;top:703.7px;width:10px;height:10px;background:#f5a623"></div>
<div class="lg" style="left:1006.7px;top:703.7px">TBILET</div>
<div class="lm" style="left:1046.0px;top:703.7px;width:10px;height:10px;background:#f0465f"></div>
<div class="lg" style="left:1057.5px;top:703.7px">KBILET</div>
<div class="lm" style="left:1098.4px;top:703.7px;width:10px;height:10px;background:#7452d6"></div>
<div class="lg" style="left:1109.9px;top:703.7px">GLBILET</div>
<!-- TIMELINE -->
<div class="abs" style="left:5px;top:601px;width:884px;height:114px;background:rgba(84,98,118,.62)"></div>
<div class="abs" style="left:20px;top:617px;width:207px;height:83px;background:rgba(98,112,132,.36)"></div>
<div class="abs" style="left:242px;top:617px;width:647px;height:83px;background:rgba(98,112,132,.36)"></div>
<div class="abs" style="left:28.5px;top:626px;width:34.5px;height:21px;background:#efefef;border:2px solid;border-color:#fdfdfd #5a5a5a #5a5a5a #fdfdfd;font:12.5px 'Liberation Sans',sans-serif;color:#222;text-align:center;line-height:17px">Play</div>
<div class="abs" style="left:65.3px;top:626px;width:46.7px;height:21px;background:#efefef;border:2px solid;border-color:#fdfdfd #5a5a5a #5a5a5a #fdfdfd;font:12.5px 'Liberation Sans',sans-serif;color:#222;text-align:center;line-height:17px">Pause</div>
<div class="abs" style="left:28.5px;top:649.5px;width:62px;height:16px;background:#fff;border:1px solid #767676;border-radius:1px;font:12.3px 'Liberation Sans',sans-serif;color:#222;line-height:14px;padding-left:3px;white-space:nowrap">15 mins</div>
<svg class="abs" style="left:78px;top:654px" width="9" height="7"><path d="M1 1.500l3.500 3.500 3.500-3.500" stroke="#000" stroke-width="1.600" fill="none"/></svg>
<div class="abs" style="left:91px;top:649.5px;font:12.4px 'Liberation Sans',sans-serif;color:#fff;line-height:16px;white-space:nowrap">per second</div>
<div class="abs" style="left:28.5px;top:671px;width:9.5px;height:9.5px;background:#fff;border:1px solid #767676;border-radius:1.500px"></div>
<div class="abs serif" style="left:38px;top:669.5px;font:bold 11.4px 'Liberation Serif',serif;color:#fff;line-height:15px;white-space:nowrap">Do not manipulate range on playback</div>
<div class="abs" style="left:336px;top:625px;width:106px;height:38px;background:#a7adb9"></div>
<div class="hb" style="left:415.8px;top:653.4px;height:9.8px"></div>
<div class="hb" style="left:442.0px;top:625.0px;height:38.2px"></div>
<div class="hb" style="left:468.2px;top:633.7px;height:29.5px"></div>
<div class="hb" style="left:494.4px;top:647.0px;height:16.2px"></div>
<div class="hb" style="left:520.6px;top:648.9px;height:14.3px"></div>
<div class="hb" style="left:546.8px;top:646.2px;height:17.0px"></div>
<div class="hb" style="left:573.0px;top:643.5px;height:19.7px"></div>
<div class="hb" style="left:599.2px;top:643.8px;height:19.4px"></div>
<div class="hb" style="left:625.4px;top:644.5px;height:18.7px"></div>
<div class="hb" style="left:651.6px;top:637.4px;height:25.8px"></div>
<div class="hb" style="left:677.8px;top:634.0px;height:29.2px"></div>
<div class="hb" style="left:704.0px;top:636.0px;height:27.2px"></div>
<div class="hb" style="left:730.2px;top:640.0px;height:23.2px"></div>
<div class="hb" style="left:756.4px;top:646.2px;height:17.0px"></div>
<div class="hb" style="left:782.6px;top:653.3px;height:9.9px"></div>
<div class="hb" style="left:808.8px;top:656.3px;height:6.9px"></div>
<div class="hb" style="left:835.0px;top:657.8px;height:5.4px"></div>
<div class="hb" style="left:861.2px;top:660.4px;height:2.8px"></div>
<div class="hb" style="left:258.6px;top:661.7px;height:1.5px;background:#c9cdd4"></div>
<div class="hb" style="left:389.6px;top:661.7px;height:1.5px;background:#c9cdd4"></div>
<div class="abs" style="left:250px;top:662.8px;width:630px;height:1.2px;background:#0a0a0a"></div>
<div class="abs" style="left:249px;top:675.8px;width:632px;height:4.4px;background:#fff;border-radius:2.200px"></div>
<div class="abs" style="left:335px;top:676.2px;width:110px;height:3.6px;background:#000"></div>
<div class="abs" style="left:328.9px;top:671.7px;width:12.6px;height:12.6px;border-radius:50%;background:#000"></div>
<svg class="abs" style="left:330.2px;top:700.5px" width="10" height="6"><path d="M0 6L5 0L10 6z" fill="#000"/></svg>
<div class="abs" style="left:438.3px;top:671.7px;width:12.6px;height:12.6px;border-radius:50%;background:#000"></div>
<svg class="abs" style="left:439.6px;top:700.5px" width="10" height="6"><path d="M0 6L5 0L10 6z" fill="#000"/></svg>
<div class="abs" style="left:248.9px;top:680px;width:1.6px;height:5.5px;background:#000"></div>
<div class="abs" style="left:262.0px;top:680px;width:1.6px;height:3.5px;background:#000"></div>
<div class="abs" style="left:275.1px;top:680px;width:1.6px;height:5.5px;background:#000"></div>
<div class="abs" style="left:288.2px;top:680px;width:1.6px;height:3.5px;background:#000"></div>
<div class="abs" style="left:301.3px;top:680px;width:1.6px;height:5.5px;background:#000"></div>
<div class="abs" style="left:314.4px;top:680px;width:1.6px;height:3.5px;background:#000"></div>
<div class="abs" style="left:327.5px;top:680px;width:1.6px;height:5.5px;background:#000"></div>
<div class="abs" style="left:340.6px;top:680px;width:1.6px;height:3.5px;background:#000"></div>
<div class="abs" style="left:353.7px;top:680px;width:1.6px;height:5.5px;background:#000"></div>
<div class="abs" style="left:366.8px;top:680px;width:1.6px;height:3.5px;background:#000"></div>
<div class="abs" style="left:379.9px;top:680px;width:1.6px;height:5.5px;background:#000"></div>
<div class="abs" style="left:393.0px;top:680px;width:1.6px;height:3.5px;background:#000"></div>
<div class="abs" style="left:406.1px;top:680px;width:1.6px;height:5.5px;background:#000"></div>
<div class="abs" style="left:419.2px;top:680px;width:1.6px;height:3.5px;background:#000"></div>
<div class="abs" style="left:432.3px;top:680px;width:1.6px;height:5.5px;background:#000"></div>
<div class="abs" style="left:445.4px;top:680px;width:1.6px;height:3.5px;background:#000"></div>
<div class="abs" style="left:458.5px;top:680px;width:1.6px;height:5.5px;background:#000"></div>
<div class="abs" style="left:471.6px;top:680px;width:1.6px;height:3.5px;background:#000"></div>
<div class="abs" style="left:484.7px;top:680px;width:1.6px;height:5.5px;background:#000"></div>
<div class="abs" style="left:497.8px;top:680px;width:1.6px;height:3.5px;background:#000"></div>
<div class="abs" style="left:510.9px;top:680px;width:1.6px;height:5.5px;background:#000"></div>
<div class="abs" style="left:524.0px;top:680px;width:1.6px;height:3.5px;background:#000"></div>
<div class="abs" style="left:537.1px;top:680px;width:1.6px;height:5.5px;background:#000"></div>
<div class="abs" style="left:550.2px;top:680px;width:1.6px;height:3.5px;background:#000"></div>
<div class="abs" style="left:563.3px;top:680px;width:1.6px;height:5.5px;background:#000"></div>
<div class="abs" style="left:576.4px;top:680px;width:1.6px;height:3.5px;background:#000"></div>
<div class="abs" style="left:589.5px;top:680px;width:1.6px;height:5.5px;background:#000"></div>
<div class="abs" style="left:602.6px;top:680px;width:1.6px;height:3.5px;background:#000"></div>
<div class="abs" style="left:615.7px;top:680px;width:1.6px;height:5.5px;background:#000"></div>
<div class="abs" style="left:628.8px;top:680px;width:1.6px;height:3.5px;background:#000"></div>
<div class="abs" style="left:641.9px;top:680px;width:1.6px;height:5.5px;background:#000"></div>
<div class="abs" style="left:655.0px;top:680px;width:1.6px;height:3.5px;background:#000"></div>
<div class="abs" style="left:668.1px;top:680px;width:1.6px;height:5.5px;background:#000"></div>
<div class="abs" style="left:681.2px;top:680px;width:1.6px;height:3.5px;background:#000"></div>
<div class="abs" style="left:694.3px;top:680px;width:1.6px;height:5.5px;background:#000"></div>
<div class="abs" style="left:707.4px;top:680px;width:1.6px;height:3.5px;background:#000"></div>
<div class="abs" style="left:720.5px;top:680px;width:1.6px;height:5.5px;background:#000"></div>
<div class="abs" style="left:733.6px;top:680px;width:1.6px;height:3.5px;background:#000"></div>
<div class="abs" style="left:746.7px;top:680px;width:1.6px;height:5.5px;background:#000"></div>
<div class="abs" style="left:759.8px;top:680px;width:1.6px;height:3.5px;background:#000"></div>
<div class="abs" style="left:772.9px;top:680px;width:1.6px;height:5.5px;background:#000"></div>
<div class="abs" style="left:786.0px;top:680px;width:1.6px;height:3.5px;background:#000"></div>
<div class="abs" style="left:799.1px;top:680px;width:1.6px;height:5.5px;background:#000"></div>
<div class="abs" style="left:812.2px;top:680px;width:1.6px;height:3.5px;background:#000"></div>
<div class="abs" style="left:825.3px;top:680px;width:1.6px;height:5.5px;background:#000"></div>
<div class="abs" style="left:838.4px;top:680px;width:1.6px;height:3.5px;background:#000"></div>
<div class="abs" style="left:851.5px;top:680px;width:1.6px;height:5.5px;background:#000"></div>
<div class="abs" style="left:864.6px;top:680px;width:1.6px;height:3.5px;background:#000"></div>
<div class="abs" style="left:877.7px;top:680px;width:1.6px;height:5.5px;background:#000"></div>
<div class="tl" style="left:239.7px">00</div>
<div class="tl" style="left:265.9px">01</div>
<div class="tl" style="left:292.1px">02</div>
<div class="tl" style="left:318.3px">03</div>
<div class="tl" style="left:344.5px">04</div>
<div class="tl" style="left:370.7px">05</div>
<div class="tl" style="left:396.9px">06</div>
<div class="tl" style="left:423.1px">07</div>
<div class="tl" style="left:449.3px">08</div>
<div class="tl" style="left:475.5px">09</div>
<div class="tl" style="left:501.7px">10</div>
<div class="tl" style="left:527.9px">11</div>
<div class="tl" style="left:554.1px">12</div>
<div class="tl" style="left:580.3px">13</div>
<div class="tl" style="left:606.5px">14</div>
<div class="tl" style="left:632.7px">15</div>
<div class="tl" style="left:658.9px">16</div>
<div class="tl" style="left:685.1px">17</div>
<div class="tl" style="left:711.3px">18</div>
<div class="tl" style="left:737.5px">19</div>
<div class="tl" style="left:763.7px">20</div>
<div class="tl" style="left:789.9px">21</div>
<div class="tl" style="left:816.1px">22</div>
<div class="tl" style="left:842.3px">23</div>
<div class="tl" style="left:868.5px">24</div>
<div class="abs" style="left:1181.500px;top:0;width:4px;height:773px;background:#fff"></div>
</div></body></html>
